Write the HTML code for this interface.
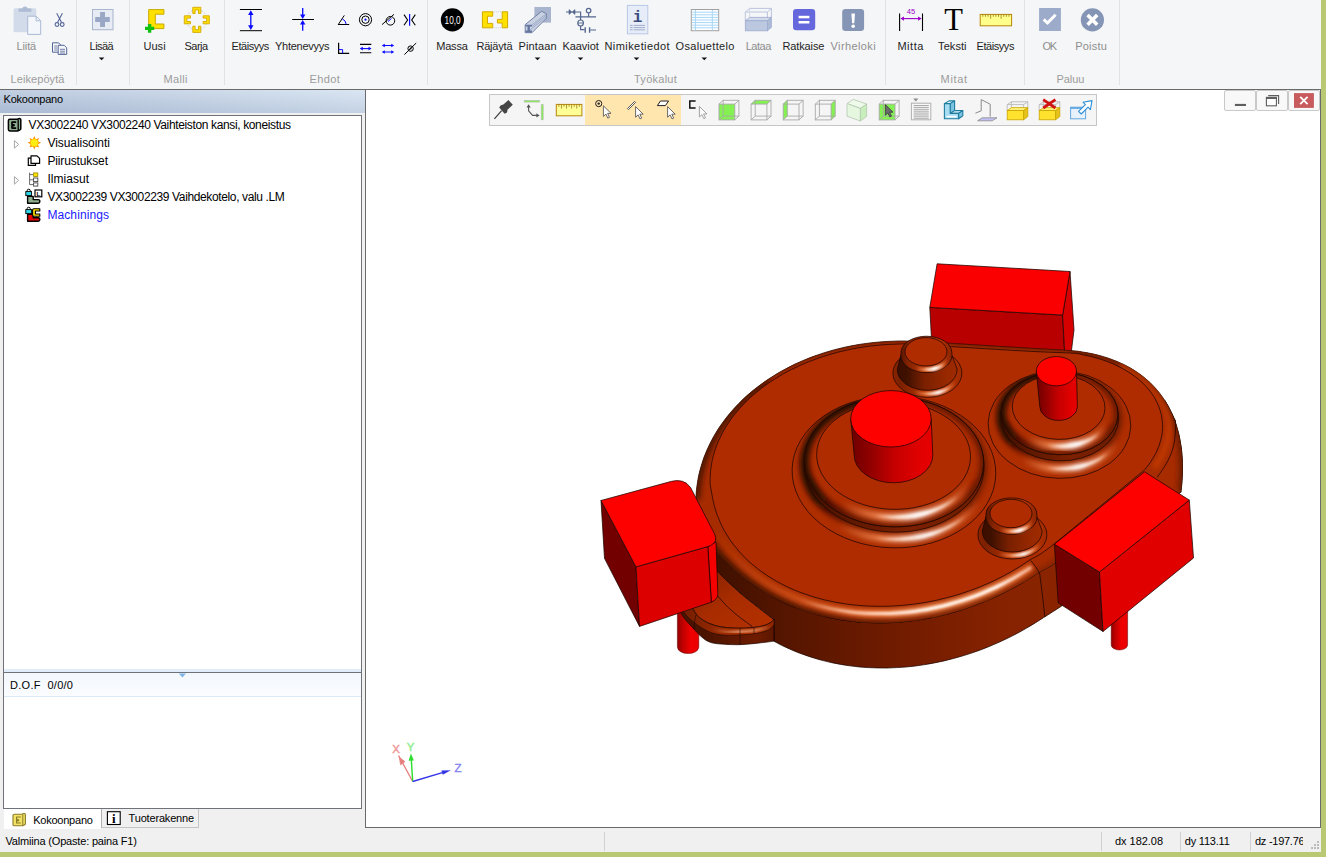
<!DOCTYPE html>
<html lang="fi"><head><meta charset="utf-8"><title>Kokoonpano</title>
<style>
html,body{margin:0;padding:0}
body{width:1326px;height:857px;overflow:hidden;background:#b9c973;position:relative;font-family:"Liberation Sans",sans-serif}
#app{position:absolute;left:0;top:0;width:1321px;height:852px;background:#f0f0f0;overflow:hidden}
#app>div,#app>svg{position:absolute}
.t{position:absolute;white-space:pre;z-index:5}
#ribbon{left:0;top:0;width:1321px;height:89px;background:#f5f6f7}
#ribbonline{left:0;top:89px;width:1321px;height:1px;background:#6a6a6a}
#seps{left:0;top:0}
.sep{position:absolute;top:0;width:1px;height:85px;background:#e1e2e4}
#panel{left:0;top:90px;width:365px;height:739px;background:#f0f0f0}
#panel>div{position:absolute}
#phead{left:0;top:0;width:365px;height:23px;background:linear-gradient(rgba(255,255,255,.12),rgba(40,70,120,.10)),linear-gradient(90deg,#b9c8de,#c4d2e5 45%,#d5e2f0)}
#tree{left:3px;top:25px;width:357px;height:556px;background:linear-gradient(#fff,#fff 553px,#e3edf9 553px);border:1px solid #6f7278}
#dof{left:3px;top:582px;width:357px;height:135px;background:linear-gradient(#f3f8fd,#fafcff 23px,#fff 24px);border:1px solid #6f7278}
#dofline{position:absolute;left:0;top:23px;width:357px;height:1px;background:#dbe9f9}
#tab1{left:4px;top:719px;width:97px;height:20px;background:#fff}
#tab2{left:101px;top:719px;width:96px;height:18px;background:#f0f0f0;border:1px solid #c4c4c4;border-top:none;border-left-color:#b0b0b0}
#view{left:365px;top:90px;width:954px;height:737px;background:#fff;border-left:1px solid #6a6a6a;border-bottom:1px solid #6a6a6a;border-right:1px solid #6a6a6a}
#ftb{left:489px;top:94px;width:606px;height:30px;background:#f5f5f5;border:1px solid #c6c6c6}
#ftbhl{position:absolute;left:95px;top:0;width:96px;height:30px;background:#ffe5ae}
#wbtns{left:1224px;top:90px;width:96px;height:21px}
.wb{position:absolute;top:0;width:30px;height:19px;background:#f8f8f8;border:1px solid #c9c9c9;border-radius:2px}
.wb:nth-child(1){left:0}.wb:nth-child(2){left:31.5px}.wb:nth-child(3){left:63.5px}
#status{left:0;top:829px;width:1321px;height:23px;background:#f0f0f0}
.ssep{position:absolute;top:3px;width:1px;height:19px;background:#d0d0d0}
#gfx{left:0;top:0;z-index:3}

</style></head>
<body>
<div id="app">
<div id="ribbon"></div>
<div id="ribbonline"></div>
<div id="seps"><div class="sep" style="left:76px"></div><div class="sep" style="left:129px"></div><div class="sep" style="left:224px"></div><div class="sep" style="left:427px"></div><div class="sep" style="left:885px"></div><div class="sep" style="left:1024px"></div><div class="sep" style="left:1119px"></div></div>
<div id="panel">
 <div id="phead"></div>
 <div id="tree"></div>
 <div id="dof"><div id="dofline"></div></div>
 <div id="tab1"></div><div id="tab2"></div>
</div>
<div id="view"></div>
<div id="ftb"><div id="ftbhl"></div></div>
<div id="wbtns"><div class="wb"></div><div class="wb"></div><div class="wb"></div></div>
<div id="status"><div class="ssep" style="left:604px"></div><div class="ssep" style="left:1101px"></div><div class="ssep" style="left:1180px"></div><div class="ssep" style="left:1250px"></div></div>
<svg id="gfx" width="1326" height="857" viewBox="0 0 1326 857">
<defs><filter id="b1" x="-20%" y="-20%" width="140%" height="140%"><feGaussianBlur stdDeviation="1"/></filter><filter id="b15" x="-20%" y="-20%" width="140%" height="140%"><feGaussianBlur stdDeviation="1.6"/></filter><filter id="b2" x="-20%" y="-20%" width="140%" height="140%"><feGaussianBlur stdDeviation="2.4"/></filter><filter id="b4" x="-20%" y="-20%" width="140%" height="140%"><feGaussianBlur stdDeviation="4"/></filter><linearGradient id="pinL" gradientUnits="userSpaceOnUse" x1="677.4" y1="0" x2="698.8" y2="0"><stop offset="0" stop-color="#960000"/><stop offset="0.3" stop-color="#c60000"/><stop offset="0.65" stop-color="#f00000"/><stop offset="1" stop-color="#e80000"/></linearGradient><linearGradient id="wallg" gradientUnits="userSpaceOnUse" x1="700" y1="0" x2="1066" y2="0"><stop offset="0" stop-color="#3a0f00"/><stop offset="0.22" stop-color="#541500"/><stop offset="0.55" stop-color="#721c00"/><stop offset="0.82" stop-color="#852200"/><stop offset="1" stop-color="#8b2400"/></linearGradient><linearGradient id="rimg" gradientUnits="userSpaceOnUse" x1="682" y1="0" x2="775" y2="0"><stop offset="0" stop-color="#4a1300"/><stop offset="0.25" stop-color="#4a1300"/><stop offset="0.55" stop-color="#5e1800"/><stop offset="0.8" stop-color="#6e1c00"/><stop offset="1" stop-color="#5a1600"/></linearGradient><linearGradient id="tabg" gradientUnits="userSpaceOnUse" x1="700" y1="580" x2="740" y2="640"><stop offset="0" stop-color="#8a2400"/><stop offset="0.45" stop-color="#a82c00"/><stop offset="1" stop-color="#b23000"/></linearGradient><linearGradient id="rimf" gradientUnits="userSpaceOnUse" x1="690" y1="0" x2="775" y2="0"><stop offset="0" stop-color="#7a2000"/><stop offset="0.4" stop-color="#9c2a00"/><stop offset="0.75" stop-color="#b03204"/><stop offset="1" stop-color="#8a2400"/></linearGradient><linearGradient id="rimhl" gradientUnits="userSpaceOnUse" x1="712" y1="0" x2="772" y2="0"><stop offset="0" stop-color="#ffb080" stop-opacity="0"/><stop offset="0.45" stop-color="#ffd0a8" stop-opacity="0.95"/><stop offset="0.75" stop-color="#ffc090" stop-opacity="0.8"/><stop offset="1" stop-color="#ffb080" stop-opacity="0"/></linearGradient><clipPath id="bandclip"><path d="M695.9,499.4 C696.0,498.0 696.1,493.7 696.4,490.8 C696.7,487.9 697.0,485.1 697.5,482.2 C697.9,479.4 698.5,476.5 699.1,473.7 C699.8,470.9 700.5,468.1 701.4,465.3 C702.2,462.5 703.1,459.7 704.1,457.0 C705.2,454.2 706.3,451.5 707.5,448.8 C708.7,446.1 710.0,443.4 711.4,440.8 C712.7,438.1 714.2,435.5 715.8,432.9 C717.3,430.3 719.0,427.8 720.7,425.3 C722.4,422.8 724.2,420.3 726.1,417.9 C728.0,415.4 730.0,413.0 732.1,410.7 C734.1,408.3 736.3,406.0 738.5,403.8 C740.7,401.5 743.0,399.3 745.3,397.1 C747.7,395.0 750.1,392.8 752.6,390.8 C755.1,388.7 757.7,386.7 760.4,384.8 C763.0,382.8 765.7,380.9 768.5,379.1 C771.3,377.2 774.1,375.5 777.0,373.7 C779.9,372.0 782.8,370.3 785.8,368.8 C788.8,367.2 791.9,365.6 795.0,364.1 C798.1,362.7 801.3,361.3 804.5,359.9 C807.7,358.6 811.0,357.3 814.3,356.1 C817.6,354.9 820.9,353.8 824.3,352.7 C827.6,351.7 831.1,350.7 834.5,349.7 C837.9,348.8 841.4,348.0 844.9,347.2 C848.4,346.4 852.0,345.7 855.5,345.1 C859.1,344.4 862.7,343.9 866.3,343.4 C869.9,342.9 873.5,342.5 877.1,342.2 C880.7,341.8 884.4,341.6 888.0,341.4 C891.7,341.2 895.3,341.1 899.0,341.0 C902.7,341.0 901.7,340.8 910.0,341.2 C918.2,341.5 933.5,342.3 948.5,343.2 C963.5,344.1 984.8,345.5 1000.0,346.4 C1015.2,347.3 1027.8,348.1 1040.0,348.8 C1052.2,349.5 1066.0,350.2 1073.0,350.8 C1080.1,351.3 1079.4,351.5 1082.5,352.0 C1085.6,352.4 1088.6,353.0 1091.6,353.6 C1094.6,354.3 1097.5,355.0 1100.3,355.7 C1103.2,356.5 1106.0,357.4 1108.7,358.3 C1111.4,359.2 1114.0,360.2 1116.6,361.3 C1119.2,362.3 1121.7,363.5 1124.2,364.7 C1126.6,365.9 1129.0,367.2 1131.3,368.5 C1133.6,369.9 1135.8,371.3 1137.9,372.8 C1140.1,374.3 1142.2,375.8 1144.2,377.5 C1146.2,379.1 1148.1,380.8 1150.0,382.5 C1151.8,384.3 1153.6,386.1 1155.3,388.0 C1157.0,389.9 1158.7,391.9 1160.2,393.9 C1161.8,396.0 1163.2,398.1 1164.6,400.2 C1166.0,402.4 1167.3,404.6 1168.6,406.9 C1169.8,409.2 1170.9,411.5 1172.0,413.9 C1173.1,416.3 1174.1,418.8 1175.0,421.3 C1175.9,423.8 1176.7,426.4 1177.4,429.1 C1178.2,431.7 1178.9,434.4 1179.4,437.1 C1180.0,439.9 1180.5,442.7 1180.9,445.6 C1181.3,448.4 1181.7,451.3 1181.9,454.3 C1182.2,457.3 1182.3,460.3 1182.4,463.3 C1182.5,466.4 1182.5,469.5 1182.4,472.7 C1182.3,475.8 1182.1,479.0 1181.9,482.3 C1181.6,485.5 1181.1,490.5 1180.9,492.2 L1066.0,555.0 C1064.0,556.5 1058.3,561.1 1053.8,564.0 C1049.3,566.9 1043.0,570.0 1039.0,572.4 C1035.0,574.8 1032.8,576.5 1029.7,578.4 C1026.5,580.4 1023.4,582.3 1020.2,584.1 C1017.0,585.9 1013.8,587.7 1010.5,589.4 C1007.3,591.1 1004.0,592.8 1000.7,594.3 C997.4,595.9 994.1,597.4 990.8,598.9 C987.4,600.4 984.1,601.8 980.7,603.1 C977.3,604.4 973.9,605.7 970.5,606.9 C967.1,608.1 963.7,609.2 960.2,610.3 C956.8,611.4 953.3,612.4 949.9,613.3 C946.4,614.3 943.0,615.1 939.5,615.9 C936.0,616.7 932.6,617.5 929.1,618.1 C925.6,618.8 922.1,619.4 918.6,619.9 C915.2,620.4 911.7,620.9 908.2,621.3 C904.7,621.7 901.3,622.0 897.8,622.2 C894.3,622.5 890.9,622.6 887.4,622.7 C884.0,622.8 880.5,622.9 877.1,622.8 C873.7,622.8 870.3,622.7 866.9,622.5 C863.5,622.4 860.1,622.1 856.7,621.8 C853.4,621.5 850.0,621.1 846.7,620.6 C843.4,620.2 840.0,619.7 836.8,619.1 C833.5,618.5 830.2,617.8 827.0,617.1 C823.8,616.3 820.6,615.5 817.4,614.7 C814.2,613.8 811.1,612.9 807.9,611.9 C804.8,610.9 801.7,609.8 798.7,608.7 C795.7,607.5 792.6,606.3 789.7,605.1 C786.7,603.8 783.8,602.5 780.9,601.1 C778.0,599.7 775.1,598.2 772.3,596.7 C769.5,595.2 766.7,593.6 764.0,591.9 C761.2,590.3 758.6,588.6 755.9,586.8 C753.3,585.0 750.7,583.2 748.2,581.3 C745.6,579.4 743.1,577.5 740.7,575.5 C738.3,573.5 735.9,571.4 733.5,569.3 C731.2,567.2 728.9,565.0 726.7,562.8 C724.5,560.6 722.3,558.3 720.2,556.0 C718.1,553.7 716.0,551.3 714.0,548.9 C712.0,546.4 709.2,542.7 708.2,541.4 L697.6,520 Z"/></clipPath><linearGradient id="fdk" gradientUnits="userSpaceOnUse" x1="716" y1="0" x2="1060" y2="0"><stop offset="0" stop-color="#4a1200" stop-opacity="1"/><stop offset="0.3" stop-color="#5a1600" stop-opacity="1"/><stop offset="0.6" stop-color="#7a2000" stop-opacity="0.95"/><stop offset="1" stop-color="#8a2600" stop-opacity="0.9"/></linearGradient><linearGradient id="fhl" gradientUnits="userSpaceOnUse" x1="716" y1="0" x2="1060" y2="0"><stop offset="0" stop-color="#e05818" stop-opacity="0"/><stop offset="0.1" stop-color="#d85416" stop-opacity="0.45"/><stop offset="0.3" stop-color="#f07030" stop-opacity="0.7"/><stop offset="0.45" stop-color="#ff8a4a" stop-opacity="0.95"/><stop offset="0.6" stop-color="#ffa870" stop-opacity="1"/><stop offset="0.8" stop-color="#ffa870" stop-opacity="1"/><stop offset="0.92" stop-color="#ff8040" stop-opacity="0.8"/><stop offset="1" stop-color="#ff8040" stop-opacity="0"/></linearGradient><linearGradient id="fhl2" gradientUnits="userSpaceOnUse" x1="800" y1="0" x2="1045" y2="0"><stop offset="0" stop-color="#fff" stop-opacity="0"/><stop offset="0.2" stop-color="#fff2e6" stop-opacity="0.6"/><stop offset="0.5" stop-color="#fff" stop-opacity="0.95"/><stop offset="0.8" stop-color="#fff" stop-opacity="0.95"/><stop offset="0.93" stop-color="#fff" stop-opacity="0.5"/><stop offset="1" stop-color="#fff" stop-opacity="0"/></linearGradient><clipPath id="topclip"><path d="M710.2,485.0 C710.2,483.8 710.1,480.1 710.1,477.6 C710.2,475.2 710.4,472.7 710.6,470.3 C710.9,467.8 711.3,465.3 711.7,462.9 C712.2,460.5 712.7,458.0 713.4,455.6 C714.0,453.2 714.8,450.7 715.6,448.3 C716.5,445.9 717.4,443.5 718.4,441.2 C719.5,438.8 720.6,436.4 721.8,434.1 C723.0,431.8 724.3,429.5 725.7,427.2 C727.1,424.9 728.6,422.6 730.1,420.4 C731.7,418.2 733.3,416.0 735.1,413.8 C736.8,411.6 738.6,409.5 740.5,407.4 C742.4,405.3 744.4,403.2 746.5,401.2 C748.5,399.2 750.7,397.2 752.9,395.3 C755.1,393.3 757.4,391.4 759.8,389.6 C762.1,387.7 764.6,385.9 767.1,384.1 C769.6,382.4 772.1,380.7 774.8,379.0 C777.4,377.3 780.1,375.7 782.8,374.1 C785.6,372.6 788.4,371.1 791.3,369.6 C794.1,368.2 797.1,366.8 800.0,365.4 C803.0,364.1 806.0,362.8 809.1,361.6 C812.2,360.4 815.3,359.2 818.5,358.1 C821.6,357.0 824.8,355.9 828.1,355.0 C831.3,354.0 834.6,353.1 837.9,352.2 C841.2,351.4 844.5,350.6 847.9,349.9 C851.2,349.1 854.6,348.5 858.0,347.9 C861.4,347.3 864.8,346.8 868.3,346.3 C871.7,345.9 875.2,345.5 878.6,345.2 C882.1,344.8 885.6,344.6 889.1,344.4 C892.6,344.2 896.0,344.1 899.5,344.0 C903.0,344.0 901.4,343.7 910.0,344.1 C918.6,344.5 936.2,345.7 951.2,346.6 C966.2,347.5 985.2,348.7 1000.0,349.6 C1014.8,350.5 1027.8,351.2 1040.0,351.8 C1052.2,352.4 1066.1,352.7 1073.1,353.2 C1080.1,353.7 1079.2,354.1 1082.1,354.6 C1085.1,355.2 1088.0,355.8 1090.9,356.5 C1093.8,357.2 1096.6,358.0 1099.4,358.8 C1102.1,359.7 1104.8,360.6 1107.5,361.6 C1110.1,362.6 1112.7,363.7 1115.2,364.8 C1117.7,366.0 1120.1,367.2 1122.4,368.5 C1124.7,369.7 1127.0,371.1 1129.2,372.5 C1131.3,373.9 1133.4,375.3 1135.4,376.8 C1137.4,378.3 1139.3,379.9 1141.0,381.5 C1142.8,383.1 1144.5,384.8 1146.1,386.5 C1147.7,388.2 1149.1,390.0 1150.5,391.8 C1151.9,393.6 1153.1,395.5 1154.3,397.4 C1155.4,399.2 1156.4,401.2 1157.3,403.1 C1158.2,405.0 1159.0,407.0 1159.7,409.0 C1160.4,411.0 1160.9,413.1 1161.4,415.1 C1161.8,417.1 1162.1,419.2 1162.3,421.3 C1162.5,423.4 1162.6,425.5 1162.5,427.5 C1162.5,429.6 1162.3,431.7 1162.0,433.8 C1161.7,435.9 1161.3,438.1 1160.7,440.1 C1160.2,442.2 1159.5,444.3 1158.8,446.4 C1158.0,448.5 1157.1,450.5 1156.1,452.6 C1155.1,454.6 1154.0,456.7 1152.7,458.7 C1151.5,460.7 1150.1,462.7 1148.7,464.6 C1147.2,466.6 1144.8,469.4 1144.0,470.4 L1054.4,543.8 L1054.4,543.8 C1052.2,545.4 1045.1,551.0 1041.0,553.7 C1036.9,556.4 1033.4,557.8 1030.0,559.8 C1026.6,561.9 1023.9,564.0 1020.8,566.0 C1017.7,567.9 1014.5,569.9 1011.3,571.7 C1008.0,573.6 1004.7,575.4 1001.3,577.1 C998.0,578.8 994.6,580.5 991.1,582.1 C987.6,583.7 984.1,585.2 980.6,586.6 C977.0,588.1 973.4,589.4 969.8,590.7 C966.2,592.0 962.5,593.2 958.8,594.4 C955.1,595.5 951.4,596.6 947.6,597.5 C943.9,598.5 940.1,599.4 936.3,600.3 C932.5,601.1 928.7,601.8 924.9,602.5 C921.1,603.1 917.3,603.7 913.4,604.2 C909.6,604.7 905.8,605.1 902.0,605.4 C898.1,605.7 894.3,606.0 890.5,606.1 C886.7,606.3 882.8,606.3 879.1,606.3 C875.3,606.3 871.5,606.2 867.7,606.0 C864.0,605.8 860.3,605.6 856.6,605.2 C852.9,604.9 849.2,604.4 845.5,603.9 C841.9,603.4 838.3,602.8 834.7,602.1 C831.2,601.4 827.7,600.6 824.2,599.8 C820.7,598.9 817.3,598.0 813.9,597.0 C810.5,596.0 807.2,594.9 804.0,593.7 C800.7,592.6 797.5,591.3 794.4,590.0 C791.2,588.7 788.2,587.3 785.2,585.8 C782.2,584.3 779.2,582.8 776.4,581.2 C773.5,579.6 770.7,577.9 768.0,576.1 C765.3,574.4 762.7,572.6 760.1,570.7 C757.6,568.8 755.2,566.8 752.8,564.8 C750.4,562.8 748.1,560.8 745.9,558.6 C743.8,556.5 741.7,554.3 739.7,552.1 C737.7,549.9 735.8,547.6 734.0,545.2 C732.1,542.9 730.4,540.5 728.8,538.0 C727.2,535.6 725.7,533.1 724.3,530.6 C722.9,528.1 721.6,525.5 720.5,522.9 C719.3,520.3 718.2,517.7 717.2,515.0 C716.2,512.3 715.4,509.6 714.6,506.9 C713.9,504.2 713.0,500.0 712.7,498.6 Z"/></clipPath><linearGradient id="sb1gr" gradientUnits="userSpaceOnUse" x1="892.9" y1="0" x2="961.9" y2="0"><stop offset="0" stop-color="#8a2400"/><stop offset="0.1" stop-color="#7a2000"/><stop offset="0.4" stop-color="#a82c00"/><stop offset="0.75" stop-color="#b83404"/><stop offset="1" stop-color="#a02a00"/></linearGradient><linearGradient id="sb1h1" gradientUnits="userSpaceOnUse" x1="913.6916919719495" y1="0" x2="955.1860180018589" y2="0"><stop offset="0" stop-color="#ff9a60" stop-opacity="0"/><stop offset="0.3" stop-color="#ff9a60" stop-opacity="0.8"/><stop offset="0.6" stop-color="#fff" stop-opacity="1"/><stop offset="0.85" stop-color="#ff9a60" stop-opacity="0.6"/><stop offset="1" stop-color="#ff9a60" stop-opacity="0"/></linearGradient><linearGradient id="sb1h1b" gradientUnits="userSpaceOnUse" x1="924.4935850835253" y1="0" x2="950.0688383542068" y2="0"><stop offset="0" stop-color="#fff0e4" stop-opacity="0"/><stop offset="0.3" stop-color="#fff0e4" stop-opacity="0.7200000000000001"/><stop offset="0.6" stop-color="#fff" stop-opacity="0.9"/><stop offset="0.85" stop-color="#fff0e4" stop-opacity="0.54"/><stop offset="1" stop-color="#fff0e4" stop-opacity="0"/></linearGradient><linearGradient id="sb1gw" gradientUnits="userSpaceOnUse" x1="897.3000000000001" y1="0" x2="957.1" y2="0"><stop offset="0" stop-color="#3a0e00"/><stop offset="0.15" stop-color="#3e1000"/><stop offset="0.45" stop-color="#7a2000"/><stop offset="0.8" stop-color="#962800"/><stop offset="1" stop-color="#a02a00"/></linearGradient><linearGradient id="sb1gf" gradientUnits="userSpaceOnUse" x1="900.8" y1="0" x2="952.0" y2="0"><stop offset="0" stop-color="#5a1600"/><stop offset="0.15" stop-color="#862400"/><stop offset="0.45" stop-color="#aa2e00"/><stop offset="0.75" stop-color="#b83404"/><stop offset="1" stop-color="#8a2400"/></linearGradient><linearGradient id="sb1h2" gradientUnits="userSpaceOnUse" x1="915.173334127648" y1="0" x2="947.5454222289724" y2="0"><stop offset="0" stop-color="#ff9a60" stop-opacity="0"/><stop offset="0.3" stop-color="#ff9a60" stop-opacity="0.8"/><stop offset="0.6" stop-color="#fff" stop-opacity="1"/><stop offset="0.85" stop-color="#ff9a60" stop-opacity="0.6"/><stop offset="1" stop-color="#ff9a60" stop-opacity="0"/></linearGradient><linearGradient id="sb1h2b" gradientUnits="userSpaceOnUse" x1="922.9452569344097" y1="0" x2="943.7061977434831" y2="0"><stop offset="0" stop-color="#fff4ea" stop-opacity="0"/><stop offset="0.3" stop-color="#fff4ea" stop-opacity="0.8"/><stop offset="0.6" stop-color="#fff" stop-opacity="1"/><stop offset="0.85" stop-color="#fff4ea" stop-opacity="0.6"/><stop offset="1" stop-color="#fff4ea" stop-opacity="0"/></linearGradient><clipPath id="rbcd"><path d="M988.1,424.6 A71.3,53.7 0 1 0 1130.8,424.6 A71.3,53.7 0 1 0 988.1,424.6Z"/></clipPath><clipPath id="rbcb"><path d="M1000.9,413.4 A58.4,41.3 0 1 0 1117.7,413.4 A58.4,41.3 0 1 0 1000.9,413.4Z"/></clipPath><linearGradient id="bs1" gradientUnits="userSpaceOnUse" x1="0" y1="459.92699999999996" x2="0" y2="441.15749999999997"><stop offset="0" stop-color="#2c0900" stop-opacity="0"/><stop offset="1" stop-color="#2c0900" stop-opacity="1"/></linearGradient><linearGradient id="rbh1" gradientUnits="userSpaceOnUse" x1="1022.4605658582678" y1="0" x2="1118.038888425762" y2="0"><stop offset="0" stop-color="#ff9e68" stop-opacity="0"/><stop offset="0.3" stop-color="#ff9e68" stop-opacity="0.8"/><stop offset="0.6" stop-color="#fff" stop-opacity="1"/><stop offset="0.85" stop-color="#ff9e68" stop-opacity="0.6"/><stop offset="1" stop-color="#ff9e68" stop-opacity="0"/></linearGradient><linearGradient id="rbh1b" gradientUnits="userSpaceOnUse" x1="1048.2899324453815" y1="0" x2="1108.9799803588392" y2="0"><stop offset="0" stop-color="#fff0e4" stop-opacity="0"/><stop offset="0.3" stop-color="#fff0e4" stop-opacity="0.8"/><stop offset="0.6" stop-color="#fff" stop-opacity="1"/><stop offset="0.85" stop-color="#fff0e4" stop-opacity="0.6"/><stop offset="1" stop-color="#fff0e4" stop-opacity="0"/></linearGradient><linearGradient id="rbgc" gradientUnits="userSpaceOnUse" x1="1000.5" y1="0" x2="1118.6" y2="0"><stop offset="0" stop-color="#3a0e00"/><stop offset="0.25" stop-color="#5e1800"/><stop offset="0.6" stop-color="#7c2000"/><stop offset="1" stop-color="#6a1c00"/></linearGradient><linearGradient id="bs2" gradientUnits="userSpaceOnUse" x1="0" y1="453.87300000000005" x2="0" y2="434.02500000000003"><stop offset="0" stop-color="#2c0900" stop-opacity="0"/><stop offset="1" stop-color="#2c0900" stop-opacity="1"/></linearGradient><linearGradient id="rbh2" gradientUnits="userSpaceOnUse" x1="1026.8037355781307" y1="0" x2="1106.7231236665596" y2="0"><stop offset="0" stop-color="#ff9e68" stop-opacity="0"/><stop offset="0.3" stop-color="#ff9e68" stop-opacity="0.8"/><stop offset="0.6" stop-color="#fff" stop-opacity="1"/><stop offset="0.85" stop-color="#ff9e68" stop-opacity="0.6"/><stop offset="1" stop-color="#ff9e68" stop-opacity="0"/></linearGradient><linearGradient id="rbh2b" gradientUnits="userSpaceOnUse" x1="1047.92517441564" y1="0" x2="1099.513957036828" y2="0"><stop offset="0" stop-color="#fff4ea" stop-opacity="0"/><stop offset="0.3" stop-color="#fff4ea" stop-opacity="0.8"/><stop offset="0.6" stop-color="#fff" stop-opacity="1"/><stop offset="0.85" stop-color="#fff4ea" stop-opacity="0.6"/><stop offset="1" stop-color="#fff4ea" stop-opacity="0"/></linearGradient><linearGradient id="rpg" gradientUnits="userSpaceOnUse" x1="1036.3" y1="0" x2="1076.5" y2="0"><stop offset="0" stop-color="#6e0000"/><stop offset="0.25" stop-color="#920000"/><stop offset="0.55" stop-color="#c60000"/><stop offset="0.85" stop-color="#e00000"/><stop offset="1" stop-color="#e60000"/></linearGradient><clipPath id="lbcd"><path d="M792.1,471.9 A101.8,75.9 0 1 0 995.8,471.9 A101.8,75.9 0 1 0 792.1,471.9Z"/></clipPath><clipPath id="lbcb"><path d="M804.0,461.9 A89.7,64.9 0 1 0 983.4,461.9 A89.7,64.9 0 1 0 804.0,461.9Z"/></clipPath><linearGradient id="bs3" gradientUnits="userSpaceOnUse" x1="0" y1="530.764" x2="0" y2="502.04"><stop offset="0" stop-color="#2c0900" stop-opacity="0"/><stop offset="1" stop-color="#2c0900" stop-opacity="1"/></linearGradient><linearGradient id="lbh1" gradientUnits="userSpaceOnUse" x1="839.2970243815639" y1="0" x2="980.3780871076714" y2="0"><stop offset="0" stop-color="#ff9e68" stop-opacity="0"/><stop offset="0.3" stop-color="#ff9e68" stop-opacity="0.8"/><stop offset="0.6" stop-color="#fff" stop-opacity="1"/><stop offset="0.85" stop-color="#ff9e68" stop-opacity="0.6"/><stop offset="1" stop-color="#ff9e68" stop-opacity="0"/></linearGradient><linearGradient id="lbh1b" gradientUnits="userSpaceOnUse" x1="877.4231851025673" y1="0" x2="967.0064318736399" y2="0"><stop offset="0" stop-color="#fff0e4" stop-opacity="0"/><stop offset="0.3" stop-color="#fff0e4" stop-opacity="0.8"/><stop offset="0.6" stop-color="#fff" stop-opacity="1"/><stop offset="0.85" stop-color="#fff0e4" stop-opacity="0.6"/><stop offset="1" stop-color="#fff0e4" stop-opacity="0"/></linearGradient><linearGradient id="lbgc" gradientUnits="userSpaceOnUse" x1="804" y1="0" x2="984" y2="0"><stop offset="0" stop-color="#3a0e00"/><stop offset="0.25" stop-color="#5e1800"/><stop offset="0.6" stop-color="#7c2000"/><stop offset="1" stop-color="#6a1c00"/></linearGradient><linearGradient id="bs4" gradientUnits="userSpaceOnUse" x1="0" y1="525.502" x2="0" y2="494.34999999999997"><stop offset="0" stop-color="#2c0900" stop-opacity="0"/><stop offset="1" stop-color="#2c0900" stop-opacity="1"/></linearGradient><linearGradient id="lbh2" gradientUnits="userSpaceOnUse" x1="842.4899917590096" y1="0" x2="970.0640149744912" y2="0"><stop offset="0" stop-color="#ff9e68" stop-opacity="0"/><stop offset="0.3" stop-color="#ff9e68" stop-opacity="0.8"/><stop offset="0.6" stop-color="#fff" stop-opacity="1"/><stop offset="0.85" stop-color="#ff9e68" stop-opacity="0.6"/><stop offset="1" stop-color="#ff9e68" stop-opacity="0"/></linearGradient><linearGradient id="lbh2b" gradientUnits="userSpaceOnUse" x1="876.2058020655065" y1="0" x2="958.5561391888558" y2="0"><stop offset="0" stop-color="#fff4ea" stop-opacity="0"/><stop offset="0.3" stop-color="#fff4ea" stop-opacity="0.8"/><stop offset="0.6" stop-color="#fff" stop-opacity="1"/><stop offset="0.85" stop-color="#fff4ea" stop-opacity="0.6"/><stop offset="1" stop-color="#fff4ea" stop-opacity="0"/></linearGradient><linearGradient id="lcg" gradientUnits="userSpaceOnUse" x1="850.7" y1="0" x2="931.2" y2="0"><stop offset="0" stop-color="#6e0000"/><stop offset="0.25" stop-color="#920000"/><stop offset="0.55" stop-color="#c60000"/><stop offset="0.85" stop-color="#e00000"/><stop offset="1" stop-color="#e60000"/></linearGradient><linearGradient id="sb2gr" gradientUnits="userSpaceOnUse" x1="977.9" y1="0" x2="1046.9" y2="0"><stop offset="0" stop-color="#8a2400"/><stop offset="0.1" stop-color="#7a2000"/><stop offset="0.4" stop-color="#a82c00"/><stop offset="0.75" stop-color="#b83404"/><stop offset="1" stop-color="#a02a00"/></linearGradient><linearGradient id="sb2h1" gradientUnits="userSpaceOnUse" x1="998.6916919719495" y1="0" x2="1040.1860180018589" y2="0"><stop offset="0" stop-color="#ff9a60" stop-opacity="0"/><stop offset="0.3" stop-color="#ff9a60" stop-opacity="0.8"/><stop offset="0.6" stop-color="#fff" stop-opacity="1"/><stop offset="0.85" stop-color="#ff9a60" stop-opacity="0.6"/><stop offset="1" stop-color="#ff9a60" stop-opacity="0"/></linearGradient><linearGradient id="sb2h1b" gradientUnits="userSpaceOnUse" x1="1009.4935850835253" y1="0" x2="1035.0688383542067" y2="0"><stop offset="0" stop-color="#fff0e4" stop-opacity="0"/><stop offset="0.3" stop-color="#fff0e4" stop-opacity="0.7200000000000001"/><stop offset="0.6" stop-color="#fff" stop-opacity="0.9"/><stop offset="0.85" stop-color="#fff0e4" stop-opacity="0.54"/><stop offset="1" stop-color="#fff0e4" stop-opacity="0"/></linearGradient><linearGradient id="sb2gw" gradientUnits="userSpaceOnUse" x1="982.3000000000001" y1="0" x2="1042.1000000000001" y2="0"><stop offset="0" stop-color="#3a0e00"/><stop offset="0.15" stop-color="#3e1000"/><stop offset="0.45" stop-color="#7a2000"/><stop offset="0.8" stop-color="#962800"/><stop offset="1" stop-color="#a02a00"/></linearGradient><linearGradient id="sb2gf" gradientUnits="userSpaceOnUse" x1="985.8" y1="0" x2="1037.0" y2="0"><stop offset="0" stop-color="#5a1600"/><stop offset="0.15" stop-color="#862400"/><stop offset="0.45" stop-color="#aa2e00"/><stop offset="0.75" stop-color="#b83404"/><stop offset="1" stop-color="#8a2400"/></linearGradient><linearGradient id="sb2h2" gradientUnits="userSpaceOnUse" x1="1000.173334127648" y1="0" x2="1032.5454222289725" y2="0"><stop offset="0" stop-color="#ff9a60" stop-opacity="0"/><stop offset="0.3" stop-color="#ff9a60" stop-opacity="0.8"/><stop offset="0.6" stop-color="#fff" stop-opacity="1"/><stop offset="0.85" stop-color="#ff9a60" stop-opacity="0.6"/><stop offset="1" stop-color="#ff9a60" stop-opacity="0"/></linearGradient><linearGradient id="sb2h2b" gradientUnits="userSpaceOnUse" x1="1007.9452569344097" y1="0" x2="1028.706197743483" y2="0"><stop offset="0" stop-color="#fff4ea" stop-opacity="0"/><stop offset="0.3" stop-color="#fff4ea" stop-opacity="0.8"/><stop offset="0.6" stop-color="#fff" stop-opacity="1"/><stop offset="0.85" stop-color="#fff4ea" stop-opacity="0.6"/><stop offset="1" stop-color="#fff4ea" stop-opacity="0"/></linearGradient><linearGradient id="pinR" gradientUnits="userSpaceOnUse" x1="1111.2" y1="0" x2="1127.6" y2="0"><stop offset="0" stop-color="#960000"/><stop offset="0.3" stop-color="#c60000"/><stop offset="0.65" stop-color="#f00000"/><stop offset="1" stop-color="#e80000"/></linearGradient></defs>
<g id="model">
<path d="M929.8,307.4 L1062.6,315.1 L1064.6,352.0 L931.8,345.0Z" fill="#b90000" stroke="#1c0600" stroke-width="0.75" stroke-linejoin="round"/>
<path d="M1070.0,271.5 L1074.0,329.8 L1071.3,352.0 L1064.6,352.0 L1062.6,315.1Z" fill="#d60000" stroke="#1c0600" stroke-width="0.75" stroke-linejoin="round"/>
<path d="M937.1,263.8 L1070.0,271.5 L1062.6,315.1 L929.8,307.4Z" fill="#fb0000" stroke="#1c0600" stroke-width="0.75" stroke-linejoin="round"/>
<path d="M677.4,600 V646.966 A10.699999999999989,6.633999999999993 0 0 0 698.8,646.966 V600Z" fill="url(#pinL)" stroke="#5a0000" stroke-width=".5"/>
<path d="M1066.0,555.0 C1064.0,556.5 1058.3,561.1 1053.8,564.0 C1049.3,566.9 1043.0,570.0 1039.0,572.4 C1035.0,574.8 1032.8,576.5 1029.7,578.4 C1026.5,580.4 1023.4,582.3 1020.2,584.1 C1017.0,585.9 1013.8,587.7 1010.5,589.4 C1007.3,591.1 1004.0,592.8 1000.7,594.3 C997.4,595.9 994.1,597.4 990.8,598.9 C987.4,600.4 984.1,601.8 980.7,603.1 C977.3,604.4 973.9,605.7 970.5,606.9 C967.1,608.1 963.7,609.2 960.2,610.3 C956.8,611.4 953.3,612.4 949.9,613.3 C946.4,614.3 943.0,615.1 939.5,615.9 C936.0,616.7 932.6,617.5 929.1,618.1 C925.6,618.8 922.1,619.4 918.6,619.9 C915.2,620.4 911.7,620.9 908.2,621.3 C904.7,621.7 901.3,622.0 897.8,622.2 C894.3,622.5 890.9,622.6 887.4,622.7 C884.0,622.8 880.5,622.9 877.1,622.8 C873.7,622.8 870.3,622.7 866.9,622.5 C863.5,622.4 860.1,622.1 856.7,621.8 C853.4,621.5 850.0,621.1 846.7,620.6 C843.4,620.2 840.0,619.7 836.8,619.1 C833.5,618.5 830.2,617.8 827.0,617.1 C823.8,616.3 820.6,615.5 817.4,614.7 C814.2,613.8 811.1,612.9 807.9,611.9 C804.8,610.9 801.7,609.8 798.7,608.7 C795.7,607.5 792.6,606.3 789.7,605.1 C786.7,603.8 783.8,602.5 780.9,601.1 C778.0,599.7 775.1,598.2 772.3,596.7 C769.5,595.2 766.7,593.6 764.0,591.9 C761.2,590.3 758.6,588.6 755.9,586.8 C753.3,585.0 750.7,583.2 748.2,581.3 C745.6,579.4 743.1,577.5 740.7,575.5 C738.3,573.5 735.9,571.4 733.5,569.3 C731.2,567.2 728.9,565.0 726.7,562.8 C724.5,560.6 722.3,558.3 720.2,556.0 C718.1,553.7 716.0,551.3 714.0,548.9 C712.0,546.4 709.2,542.7 708.2,541.4 L706.0,556.0 C708.0,558.7 712.4,565.8 718.1,572.0 C723.8,578.2 733.4,587.2 740.0,593.0 C746.6,598.8 752.0,602.6 757.5,607.0 C763.0,611.4 770.6,617.2 773.2,619.2 L774.1,641.1 L774.0,641.3 C775.3,641.9 779.1,644.0 781.7,645.3 C784.3,646.6 786.9,647.8 789.6,649.0 C792.3,650.2 795.0,651.3 797.7,652.4 C800.4,653.5 803.2,654.5 806.0,655.4 C808.8,656.4 811.6,657.3 814.5,658.2 C817.3,659.0 820.2,659.8 823.1,660.6 C826.0,661.3 828.9,662.0 831.9,662.7 C834.8,663.3 837.8,663.9 840.8,664.4 C843.8,664.9 846.8,665.4 849.8,665.8 C852.8,666.2 855.9,666.6 859.0,666.9 C862.0,667.1 865.1,667.4 868.2,667.6 C871.3,667.7 874.4,667.9 877.5,667.9 C880.6,668.0 883.8,668.0 886.9,668.0 C890.1,667.9 893.2,667.8 896.4,667.6 C899.5,667.5 902.7,667.2 905.9,667.0 C909.0,666.7 912.2,666.3 915.4,666.0 C918.6,665.6 921.7,665.1 924.9,664.6 C928.1,664.1 931.3,663.5 934.4,662.9 C937.6,662.3 940.8,661.6 944.0,660.9 C947.1,660.1 950.3,659.4 953.4,658.5 C956.6,657.7 959.7,656.8 962.9,655.8 C966.0,654.9 969.2,653.9 972.3,652.8 C975.4,651.7 978.5,650.6 981.6,649.5 C984.7,648.3 987.8,647.1 990.8,645.8 C993.9,644.5 996.9,643.2 1000.0,641.8 C1003.0,640.4 1006.0,639.0 1009.0,637.5 C1012.0,636.1 1014.9,634.5 1017.9,633.0 C1020.8,631.4 1023.7,629.8 1026.6,628.1 C1029.5,626.4 1032.4,624.7 1035.2,622.9 C1038.1,621.2 1039.5,620.2 1043.7,617.5 C1047.9,614.8 1056.2,609.6 1060.3,606.9 C1064.4,604.2 1066.7,602.0 1068.0,601.0 Z" fill="url(#wallg)" stroke="#1c0600" stroke-width="0.75" stroke-linejoin="round"/>
<path d="M1175.1,420.0 C1175.2,421.4 1175.9,424.0 1175.6,428.4 C1175.3,432.8 1174.9,440.6 1173.5,446.2 C1172.1,451.8 1169.9,456.8 1167.2,462.0 C1164.5,467.2 1159.0,474.7 1157.3,477.2 L1170,500 L1180.4,492.4 L1180.9,492.2 C1181.1,490.5 1181.6,485.5 1181.9,482.3 C1182.1,479.0 1182.3,475.8 1182.4,472.7 C1182.5,469.5 1182.5,466.4 1182.4,463.3 C1182.3,460.3 1182.2,457.3 1181.9,454.3 C1181.7,451.3 1181.3,448.4 1180.9,445.6 C1180.5,442.7 1180.0,439.9 1179.4,437.1 C1178.9,434.4 1178.2,431.7 1177.4,429.1 C1176.7,426.4 1175.9,423.8 1175.0,421.3 C1174.1,418.8 1173.1,416.3 1172.0,413.9 C1170.9,411.5 1169.8,409.2 1168.6,406.9 C1167.3,404.6 1165.3,401.3 1164.6,400.2 Z" fill="#8a2600" stroke="#1c0600" stroke-width="0.75"/>
<path d="M1030.8,560.5 Q1036.5,567 1039.7,573.6 L1042.3,594.1 L1044.9,617" fill="none" stroke="#1c0600" stroke-width="0.75"/>
<path d="M774.1,619.4 C773.4,620.0 771.6,622.0 770.0,623.0 C768.4,624.0 766.4,624.8 764.4,625.4 C762.5,626.1 760.3,626.5 758.3,626.8 C756.2,627.2 754.1,627.5 752.1,627.7 C750.0,627.9 748.0,628.0 746.0,628.1 C744.0,628.2 742.0,628.2 739.9,628.2 C737.9,628.2 735.8,628.1 733.7,628.1 C731.6,628.0 729.5,627.9 727.4,627.7 C725.3,627.5 723.2,627.2 721.1,626.9 C719.1,626.5 717.0,626.1 715.0,625.5 C713.0,624.9 711.0,624.2 709.0,623.4 C707.1,622.5 705.1,621.6 703.4,620.4 C701.6,619.3 699.8,618.0 698.3,616.5 C696.8,615.0 695.5,613.4 694.4,611.6 C693.4,609.8 692.6,607.7 691.8,605.8 C691.1,603.8 690.3,601.0 690.0,600.0 L679.0,609.0 C679.3,609.6 679.9,611.2 680.8,612.7 C681.7,614.3 683.0,616.5 684.3,618.2 C685.5,620.0 687.0,621.7 688.5,623.3 C689.9,624.9 691.4,626.4 692.8,627.9 C694.2,629.4 695.5,630.9 696.9,632.3 C698.3,633.8 699.7,635.3 701.2,636.6 C702.7,637.9 704.4,639.3 706.2,640.4 C708.0,641.4 709.9,642.2 711.9,642.8 C713.9,643.3 716.0,643.5 718.1,643.8 C720.1,644.0 722.3,644.1 724.4,644.2 C726.5,644.4 728.5,644.5 730.6,644.6 C732.7,644.7 734.7,644.7 736.8,644.7 C738.8,644.7 740.9,644.6 743.0,644.5 C745.0,644.4 747.1,644.2 749.2,644.0 C751.3,643.8 753.4,643.6 755.5,643.4 C757.7,643.2 760.0,642.9 762.2,642.6 C764.4,642.4 766.7,642.1 768.7,641.8 C770.7,641.6 773.2,641.2 774.1,641.1 Z" fill="url(#rimg)" stroke="#1c0600" stroke-width="0.75" stroke-linejoin="round"/>
<path d="M706.0,556.0 C708.0,558.7 712.4,565.8 718.1,572.0 C723.8,578.2 733.4,587.2 740.0,593.0 C746.6,598.8 752.0,602.6 757.5,607.0 C763.0,611.4 770.6,617.2 773.2,619.2 L774.1,619.4 L774.1,619.4 C773.4,620.0 771.6,622.0 770.0,623.0 C768.4,624.0 766.4,624.8 764.4,625.4 C762.5,626.1 760.3,626.5 758.3,626.8 C756.2,627.2 754.1,627.5 752.1,627.7 C750.0,627.9 748.0,628.0 746.0,628.1 C744.0,628.2 742.0,628.2 739.9,628.2 C737.9,628.2 735.8,628.1 733.7,628.1 C731.6,628.0 729.5,627.9 727.4,627.7 C725.3,627.5 723.2,627.2 721.1,626.9 C719.1,626.5 717.0,626.1 715.0,625.5 C713.0,624.9 711.0,624.2 709.0,623.4 C707.1,622.5 705.1,621.6 703.4,620.4 C701.6,619.3 699.8,618.0 698.3,616.5 C696.8,615.0 695.5,613.4 694.4,611.6 C693.4,609.8 692.6,607.7 691.8,605.8 C691.1,603.8 690.3,601.0 690.0,600.0 L700,585 Z" fill="url(#tabg)" stroke="#1c0600" stroke-width="0.75" stroke-linejoin="round"/>
<path d="M716.0,594.0 C718.0,596.2 723.7,603.1 727.7,607.0 C731.7,610.9 736.0,614.3 740.0,617.5 C744.0,620.7 749.6,624.3 752.0,626.4 C754.4,628.5 754.2,629.4 754.6,630.0 " fill="none" stroke="#1c0600" stroke-width="0.75"/>
<path d="M774.1,619.4 C773.4,620.0 771.6,622.0 770.0,623.0 C768.4,624.0 766.4,624.8 764.4,625.4 C762.5,626.1 760.3,626.5 758.3,626.8 C756.2,627.2 754.1,627.5 752.1,627.7 C750.0,627.9 748.0,628.0 746.0,628.1 C744.0,628.2 742.0,628.2 739.9,628.2 C737.9,628.2 735.8,628.1 733.7,628.1 C731.6,628.0 729.5,627.9 727.4,627.7 C725.3,627.5 723.2,627.2 721.1,626.9 C719.1,626.5 717.0,626.1 715.0,625.5 C713.0,624.9 711.0,624.2 709.0,623.4 C707.1,622.5 705.1,621.6 703.4,620.4 C701.6,619.3 699.8,618.0 698.3,616.5 C696.8,615.0 695.5,613.4 694.4,611.6 C693.4,609.8 692.6,607.7 691.8,605.8 C691.1,603.8 690.3,601.0 690.0,600.0 L683.0,611.0 C683.8,612.0 685.9,615.0 687.8,617.0 C689.7,619.0 691.8,620.8 694.3,622.7 C696.8,624.6 699.4,626.6 702.5,628.4 C705.6,630.2 709.3,632.1 713.1,633.3 C716.9,634.4 720.9,635.0 725.4,635.3 C729.9,635.6 735.2,635.1 740.0,634.9 C744.8,634.6 749.2,634.6 754.0,633.8 C758.8,633.0 765.3,631.5 768.6,630.0 C771.9,628.5 773.1,625.5 774.0,624.6 Z" fill="url(#rimf)" stroke="none"/>
<path d="M774.0,624.6 C773.1,625.5 771.9,628.5 768.6,630.0 C765.3,631.5 758.8,633.0 754.0,633.8 C749.2,634.6 744.8,634.6 740.0,634.9 C735.2,635.1 729.9,635.6 725.4,635.3 C720.9,635.0 716.9,634.4 713.1,633.3 C709.3,632.1 705.6,630.2 702.5,628.4 C699.4,626.6 696.8,624.6 694.3,622.7 C691.8,620.8 689.7,619.0 687.8,617.0 C685.9,615.0 683.8,612.0 683.0,611.0 " fill="none" stroke="#1c0600" stroke-width=".6"/>
<path d="M774.1,619.4 C773.4,620.0 771.6,622.0 770.0,623.0 C768.4,624.0 766.4,624.8 764.4,625.4 C762.5,626.1 760.3,626.5 758.3,626.8 C756.2,627.2 754.1,627.5 752.1,627.7 C750.0,627.9 748.0,628.0 746.0,628.1 C744.0,628.2 742.0,628.2 739.9,628.2 C737.9,628.2 735.8,628.1 733.7,628.1 C731.6,628.0 729.5,627.9 727.4,627.7 C725.3,627.5 723.2,627.2 721.1,626.9 C719.1,626.5 717.0,626.1 715.0,625.5 C713.0,624.9 711.0,624.2 709.0,623.4 C707.1,622.5 705.1,621.6 703.4,620.4 C701.6,619.3 699.8,618.0 698.3,616.5 C696.8,615.0 695.5,613.4 694.4,611.6 C693.4,609.8 692.6,607.7 691.8,605.8 C691.1,603.8 690.3,601.0 690.0,600.0 " fill="none" stroke="#1c0600" stroke-width=".6"/>
<path d="M713.0,629.4 C715.1,629.8 720.9,631.2 725.4,631.6 C729.9,632.0 735.2,631.8 740.0,631.6 C744.8,631.4 749.3,631.3 754.0,630.6 C758.7,629.9 766.0,627.8 768.4,627.2 " fill="none" stroke="url(#rimhl)" stroke-width="1.8" filter="url(#b1)"/>
<path d="M740,628.2 V644.7 M754,627.6 V633.8 M774.1,619.4 V641.1 M694.3,622.7 V629.2 M696,614.5 L694.3,622.7" fill="none" stroke="#1c0600" stroke-width=".6"/>
<path d="M695.9,499.4 C696.0,498.0 696.1,493.7 696.4,490.8 C696.7,487.9 697.0,485.1 697.5,482.2 C697.9,479.4 698.5,476.5 699.1,473.7 C699.8,470.9 700.5,468.1 701.4,465.3 C702.2,462.5 703.1,459.7 704.1,457.0 C705.2,454.2 706.3,451.5 707.5,448.8 C708.7,446.1 710.0,443.4 711.4,440.8 C712.7,438.1 714.2,435.5 715.8,432.9 C717.3,430.3 719.0,427.8 720.7,425.3 C722.4,422.8 724.2,420.3 726.1,417.9 C728.0,415.4 730.0,413.0 732.1,410.7 C734.1,408.3 736.3,406.0 738.5,403.8 C740.7,401.5 743.0,399.3 745.3,397.1 C747.7,395.0 750.1,392.8 752.6,390.8 C755.1,388.7 757.7,386.7 760.4,384.8 C763.0,382.8 765.7,380.9 768.5,379.1 C771.3,377.2 774.1,375.5 777.0,373.7 C779.9,372.0 782.8,370.3 785.8,368.8 C788.8,367.2 791.9,365.6 795.0,364.1 C798.1,362.7 801.3,361.3 804.5,359.9 C807.7,358.6 811.0,357.3 814.3,356.1 C817.6,354.9 820.9,353.8 824.3,352.7 C827.6,351.7 831.1,350.7 834.5,349.7 C837.9,348.8 841.4,348.0 844.9,347.2 C848.4,346.4 852.0,345.7 855.5,345.1 C859.1,344.4 862.7,343.9 866.3,343.4 C869.9,342.9 873.5,342.5 877.1,342.2 C880.7,341.8 884.4,341.6 888.0,341.4 C891.7,341.2 895.3,341.1 899.0,341.0 C902.7,341.0 901.7,340.8 910.0,341.2 C918.2,341.5 933.5,342.3 948.5,343.2 C963.5,344.1 984.8,345.5 1000.0,346.4 C1015.2,347.3 1027.8,348.1 1040.0,348.8 C1052.2,349.5 1066.0,350.2 1073.0,350.8 C1080.1,351.3 1079.4,351.5 1082.5,352.0 C1085.6,352.4 1088.6,353.0 1091.6,353.6 C1094.6,354.3 1097.5,355.0 1100.3,355.7 C1103.2,356.5 1106.0,357.4 1108.7,358.3 C1111.4,359.2 1114.0,360.2 1116.6,361.3 C1119.2,362.3 1121.7,363.5 1124.2,364.7 C1126.6,365.9 1129.0,367.2 1131.3,368.5 C1133.6,369.9 1135.8,371.3 1137.9,372.8 C1140.1,374.3 1142.2,375.8 1144.2,377.5 C1146.2,379.1 1148.1,380.8 1150.0,382.5 C1151.8,384.3 1153.6,386.1 1155.3,388.0 C1157.0,389.9 1158.7,391.9 1160.2,393.9 C1161.8,396.0 1163.2,398.1 1164.6,400.2 C1166.0,402.4 1167.3,404.6 1168.6,406.9 C1169.8,409.2 1170.9,411.5 1172.0,413.9 C1173.1,416.3 1174.1,418.8 1175.0,421.3 C1175.9,423.8 1176.7,426.4 1177.4,429.1 C1178.2,431.7 1178.9,434.4 1179.4,437.1 C1180.0,439.9 1180.5,442.7 1180.9,445.6 C1181.3,448.4 1181.7,451.3 1181.9,454.3 C1182.2,457.3 1182.3,460.3 1182.4,463.3 C1182.5,466.4 1182.5,469.5 1182.4,472.7 C1182.3,475.8 1182.1,479.0 1181.9,482.3 C1181.6,485.5 1181.1,490.5 1180.9,492.2 L1066.0,555.0 C1064.0,556.5 1058.3,561.1 1053.8,564.0 C1049.3,566.9 1043.0,570.0 1039.0,572.4 C1035.0,574.8 1032.8,576.5 1029.7,578.4 C1026.5,580.4 1023.4,582.3 1020.2,584.1 C1017.0,585.9 1013.8,587.7 1010.5,589.4 C1007.3,591.1 1004.0,592.8 1000.7,594.3 C997.4,595.9 994.1,597.4 990.8,598.9 C987.4,600.4 984.1,601.8 980.7,603.1 C977.3,604.4 973.9,605.7 970.5,606.9 C967.1,608.1 963.7,609.2 960.2,610.3 C956.8,611.4 953.3,612.4 949.9,613.3 C946.4,614.3 943.0,615.1 939.5,615.9 C936.0,616.7 932.6,617.5 929.1,618.1 C925.6,618.8 922.1,619.4 918.6,619.9 C915.2,620.4 911.7,620.9 908.2,621.3 C904.7,621.7 901.3,622.0 897.8,622.2 C894.3,622.5 890.9,622.6 887.4,622.7 C884.0,622.8 880.5,622.9 877.1,622.8 C873.7,622.8 870.3,622.7 866.9,622.5 C863.5,622.4 860.1,622.1 856.7,621.8 C853.4,621.5 850.0,621.1 846.7,620.6 C843.4,620.2 840.0,619.7 836.8,619.1 C833.5,618.5 830.2,617.8 827.0,617.1 C823.8,616.3 820.6,615.5 817.4,614.7 C814.2,613.8 811.1,612.9 807.9,611.9 C804.8,610.9 801.7,609.8 798.7,608.7 C795.7,607.5 792.6,606.3 789.7,605.1 C786.7,603.8 783.8,602.5 780.9,601.1 C778.0,599.7 775.1,598.2 772.3,596.7 C769.5,595.2 766.7,593.6 764.0,591.9 C761.2,590.3 758.6,588.6 755.9,586.8 C753.3,585.0 750.7,583.2 748.2,581.3 C745.6,579.4 743.1,577.5 740.7,575.5 C738.3,573.5 735.9,571.4 733.5,569.3 C731.2,567.2 728.9,565.0 726.7,562.8 C724.5,560.6 722.3,558.3 720.2,556.0 C718.1,553.7 716.0,551.3 714.0,548.9 C712.0,546.4 709.2,542.7 708.2,541.4 L697.6,520 Z" fill="#a62c00" stroke="#1c0600" stroke-width="0.75" stroke-linejoin="round"/>
<g clip-path="url(#bandclip)">
<path d="M695.9,499.4 C696.0,498.0 696.1,493.7 696.4,490.8 C696.7,487.9 697.0,485.1 697.5,482.2 C697.9,479.4 698.5,476.5 699.1,473.7 C699.8,470.9 700.5,468.1 701.4,465.3 C702.2,462.5 703.1,459.7 704.1,457.0 C705.2,454.2 706.3,451.5 707.5,448.8 C708.7,446.1 710.0,443.4 711.4,440.8 C712.7,438.1 714.2,435.5 715.8,432.9 C717.3,430.3 719.0,427.8 720.7,425.3 C722.4,422.8 724.2,420.3 726.1,417.9 C728.0,415.4 730.0,413.0 732.1,410.7 C734.1,408.3 736.3,406.0 738.5,403.8 C740.7,401.5 743.0,399.3 745.3,397.1 C747.7,395.0 750.1,392.8 752.6,390.8 C755.1,388.7 757.7,386.7 760.4,384.8 C763.0,382.8 767.1,380.0 768.5,379.1 " fill="none" stroke="#4a1200" stroke-width="9" filter="url(#b2)" opacity=".9"/>
<path d="M760.4,384.8 C761.7,383.8 765.7,380.9 768.5,379.1 C771.3,377.2 774.1,375.5 777.0,373.7 C779.9,372.0 782.8,370.3 785.8,368.8 C788.8,367.2 791.9,365.6 795.0,364.1 C798.1,362.7 801.3,361.3 804.5,359.9 C807.7,358.6 811.0,357.3 814.3,356.1 C817.6,354.9 820.9,353.8 824.3,352.7 C827.6,351.7 831.1,350.7 834.5,349.7 C837.9,348.8 841.4,348.0 844.9,347.2 C848.4,346.4 852.0,345.7 855.5,345.1 C859.1,344.4 862.7,343.9 866.3,343.4 C869.9,342.9 873.5,342.5 877.1,342.2 C880.7,341.8 884.4,341.6 888.0,341.4 C891.7,341.2 895.3,341.1 899.0,341.0 C902.7,341.0 901.7,340.8 910.0,341.2 C918.2,341.5 933.5,342.3 948.5,343.2 C963.5,344.1 984.8,345.5 1000.0,346.4 C1015.2,347.3 1027.8,348.1 1040.0,348.8 C1052.2,349.5 1066.0,350.2 1073.0,350.8 C1080.1,351.3 1079.4,351.5 1082.5,352.0 C1085.6,352.4 1090.1,353.4 1091.6,353.6 " fill="none" stroke="#6a1a00" stroke-width="3" filter="url(#b1)" opacity=".8"/>
<path d="M1073.0,350.8 C1074.6,351.0 1079.4,351.5 1082.5,352.0 C1085.6,352.4 1088.6,353.0 1091.6,353.6 C1094.6,354.3 1097.5,355.0 1100.3,355.7 C1103.2,356.5 1106.0,357.4 1108.7,358.3 C1111.4,359.2 1114.0,360.2 1116.6,361.3 C1119.2,362.3 1121.7,363.5 1124.2,364.7 C1126.6,365.9 1129.0,367.2 1131.3,368.5 C1133.6,369.9 1135.8,371.3 1137.9,372.8 C1140.1,374.3 1142.2,375.8 1144.2,377.5 C1146.2,379.1 1148.1,380.8 1150.0,382.5 C1151.8,384.3 1153.6,386.1 1155.3,388.0 C1157.0,389.9 1158.7,391.9 1160.2,393.9 C1161.8,396.0 1163.2,398.1 1164.6,400.2 C1166.0,402.4 1167.3,404.6 1168.6,406.9 C1169.8,409.2 1170.9,411.5 1172.0,413.9 C1173.1,416.3 1174.1,418.8 1175.0,421.3 C1175.9,423.8 1176.7,426.4 1177.4,429.1 C1178.2,431.7 1178.9,434.4 1179.4,437.1 C1180.0,439.9 1180.5,442.7 1180.9,445.6 C1181.3,448.4 1181.7,451.3 1181.9,454.3 C1182.2,457.3 1182.3,460.3 1182.4,463.3 C1182.5,466.4 1182.5,469.5 1182.4,472.7 C1182.3,475.8 1182.1,479.0 1181.9,482.3 C1181.6,485.5 1181.1,490.5 1180.9,492.2 " fill="none" stroke="#6a1c00" stroke-width="8" filter="url(#b2)" opacity=".9"/>
<path d="M1120.0,365.0 C1124.0,367.7 1137.3,375.2 1144.0,381.0 C1150.7,386.8 1155.9,393.5 1160.0,400.0 C1164.1,406.5 1167.3,413.7 1168.6,420.0 C1169.9,426.3 1169.0,432.3 1168.0,438.0 C1167.0,443.7 1164.9,449.0 1162.6,454.0 C1160.3,459.0 1155.4,465.7 1154.0,468.0 " fill="none" stroke="#c83c06" stroke-width="5" filter="url(#b2)" opacity=".9"/>
<path d="M1066.0,555.0 C1064.0,556.5 1058.3,561.1 1053.8,564.0 C1049.3,566.9 1043.0,570.0 1039.0,572.4 C1035.0,574.8 1032.8,576.5 1029.7,578.4 C1026.5,580.4 1023.4,582.3 1020.2,584.1 C1017.0,585.9 1013.8,587.7 1010.5,589.4 C1007.3,591.1 1004.0,592.8 1000.7,594.3 C997.4,595.9 994.1,597.4 990.8,598.9 C987.4,600.4 984.1,601.8 980.7,603.1 C977.3,604.4 973.9,605.7 970.5,606.9 C967.1,608.1 963.7,609.2 960.2,610.3 C956.8,611.4 953.3,612.4 949.9,613.3 C946.4,614.3 943.0,615.1 939.5,615.9 C936.0,616.7 932.6,617.5 929.1,618.1 C925.6,618.8 922.1,619.4 918.6,619.9 C915.2,620.4 911.7,620.9 908.2,621.3 C904.7,621.7 901.3,622.0 897.8,622.2 C894.3,622.5 890.9,622.6 887.4,622.7 C884.0,622.8 880.5,622.9 877.1,622.8 C873.7,622.8 870.3,622.7 866.9,622.5 C863.5,622.4 860.1,622.1 856.7,621.8 C853.4,621.5 850.0,621.1 846.7,620.6 C843.4,620.2 840.0,619.7 836.8,619.1 C833.5,618.5 830.2,617.8 827.0,617.1 C823.8,616.3 820.6,615.5 817.4,614.7 C814.2,613.8 811.1,612.9 807.9,611.9 C804.8,610.9 801.7,609.8 798.7,608.7 C795.7,607.5 792.6,606.3 789.7,605.1 C786.7,603.8 783.8,602.5 780.9,601.1 C778.0,599.7 775.1,598.2 772.3,596.7 C769.5,595.2 766.7,593.6 764.0,591.9 C761.2,590.3 758.6,588.6 755.9,586.8 C753.3,585.0 750.7,583.2 748.2,581.3 C745.6,579.4 743.1,577.5 740.7,575.5 C738.3,573.5 735.9,571.4 733.5,569.3 C731.2,567.2 728.9,565.0 726.7,562.8 C724.5,560.6 722.3,558.3 720.2,556.0 C718.1,553.7 716.0,551.3 714.0,548.9 C712.0,546.4 709.2,542.7 708.2,541.4 " fill="none" stroke="url(#fdk)" stroke-width="9" filter="url(#b2)"/>
<path d="M1031.6,566.9 C1030.1,567.9 1025.6,570.9 1022.4,572.8 C1019.3,574.8 1016.2,576.6 1012.9,578.5 C1009.6,580.3 1006.2,582.1 1002.8,583.8 C999.4,585.5 996.2,587.1 992.7,588.7 C989.2,590.3 985.5,591.9 982.0,593.3 C978.4,594.8 975.1,596.1 971.5,597.4 C967.8,598.7 964.0,600.0 960.3,601.1 C956.7,602.2 953.2,603.2 949.5,604.2 C945.8,605.2 942.0,606.2 938.2,607.0 C934.4,607.9 930.6,608.7 926.7,609.4 C922.9,610.0 919.1,610.6 915.3,611.2 C911.4,611.7 908.1,612.1 903.8,612.5 C899.4,612.9 893.5,613.2 889.1,613.4 C884.8,613.6 881.5,613.6 877.8,613.6 C874.0,613.6 870.2,613.4 866.5,613.2 C862.7,613.0 859.0,612.7 855.3,612.4 C851.6,612.0 848.0,611.6 844.3,611.0 C840.6,610.5 836.8,609.8 833.2,609.1 C829.7,608.4 826.5,607.7 823.1,606.8 C819.6,606.0 816.1,605.0 812.7,604.0 C809.2,602.9 805.8,601.8 802.5,600.6 C799.3,599.5 796.3,598.3 793.2,597.0 C790.0,595.7 786.7,594.2 783.7,592.7 C780.7,591.3 777.8,589.8 775.0,588.2 C772.1,586.7 769.4,585.0 766.6,583.3 C763.9,581.6 761.3,579.9 758.7,578.0 C756.1,576.2 753.6,574.3 751.1,572.4 C748.7,570.4 746.3,568.4 744.0,566.3 C741.7,564.3 739.4,562.1 737.3,560.0 C735.2,557.9 733.4,555.8 731.4,553.6 C729.5,551.4 727.4,548.9 725.7,546.6 C723.9,544.3 722.3,542.1 720.7,539.7 C719.1,537.3 716.8,533.5 716.0,532.3 " fill="none" stroke="url(#fhl)" stroke-width="7" filter="url(#b2)"/>
<path d="M1031.6,566.9 C1030.1,567.9 1025.6,570.9 1022.4,572.8 C1019.3,574.8 1016.2,576.6 1012.9,578.5 C1009.6,580.3 1006.2,582.1 1002.8,583.8 C999.4,585.5 996.2,587.1 992.7,588.7 C989.2,590.3 985.5,591.9 982.0,593.3 C978.4,594.8 975.1,596.1 971.5,597.4 C967.8,598.7 964.0,600.0 960.3,601.1 C956.7,602.2 953.2,603.2 949.5,604.2 C945.8,605.2 942.0,606.2 938.2,607.0 C934.4,607.9 930.6,608.7 926.7,609.4 C922.9,610.0 919.1,610.6 915.3,611.2 C911.4,611.7 908.1,612.1 903.8,612.5 C899.4,612.9 893.5,613.2 889.1,613.4 C884.8,613.6 881.5,613.6 877.8,613.6 C874.0,613.6 870.2,613.4 866.5,613.2 C862.7,613.0 859.0,612.7 855.3,612.4 C851.6,612.0 848.0,611.6 844.3,611.0 C840.6,610.5 836.8,609.8 833.2,609.1 C829.7,608.4 826.5,607.7 823.1,606.8 C819.6,606.0 816.1,605.0 812.7,604.0 C809.2,602.9 805.8,601.8 802.5,600.6 C799.3,599.5 796.3,598.3 793.2,597.0 C790.0,595.7 786.7,594.2 783.7,592.7 C780.7,591.3 777.8,589.8 775.0,588.2 C772.1,586.7 769.4,585.0 766.6,583.3 C763.9,581.6 761.3,579.9 758.7,578.0 C756.1,576.2 753.6,574.3 751.1,572.4 C748.7,570.4 746.3,568.4 744.0,566.3 C741.7,564.3 739.4,562.1 737.3,560.0 C735.2,557.9 733.4,555.8 731.4,553.6 C729.5,551.4 727.4,548.9 725.7,546.6 C723.9,544.3 722.3,542.1 720.7,539.7 C719.1,537.3 716.8,533.5 716.0,532.3 " fill="none" stroke="url(#fhl2)" stroke-width="3" filter="url(#b1)"/>
</g>
<path d="M1175.1,420.0 C1175.2,421.4 1175.9,424.0 1175.6,428.4 C1175.3,432.8 1174.9,440.6 1173.5,446.2 C1172.1,451.8 1169.9,456.8 1167.2,462.0 C1164.5,467.2 1159.0,474.7 1157.3,477.2 " fill="none" stroke="#1c0600" stroke-width="0.75"/>
<path d="M1030.8,560.5 Q1036.5,567 1039.7,573.6" fill="none" stroke="#1c0600" stroke-width="0.75"/>
<path d="M710.2,485.0 C710.2,483.8 710.1,480.1 710.1,477.6 C710.2,475.2 710.4,472.7 710.6,470.3 C710.9,467.8 711.3,465.3 711.7,462.9 C712.2,460.5 712.7,458.0 713.4,455.6 C714.0,453.2 714.8,450.7 715.6,448.3 C716.5,445.9 717.4,443.5 718.4,441.2 C719.5,438.8 720.6,436.4 721.8,434.1 C723.0,431.8 724.3,429.5 725.7,427.2 C727.1,424.9 728.6,422.6 730.1,420.4 C731.7,418.2 733.3,416.0 735.1,413.8 C736.8,411.6 738.6,409.5 740.5,407.4 C742.4,405.3 744.4,403.2 746.5,401.2 C748.5,399.2 750.7,397.2 752.9,395.3 C755.1,393.3 757.4,391.4 759.8,389.6 C762.1,387.7 764.6,385.9 767.1,384.1 C769.6,382.4 772.1,380.7 774.8,379.0 C777.4,377.3 780.1,375.7 782.8,374.1 C785.6,372.6 788.4,371.1 791.3,369.6 C794.1,368.2 797.1,366.8 800.0,365.4 C803.0,364.1 806.0,362.8 809.1,361.6 C812.2,360.4 815.3,359.2 818.5,358.1 C821.6,357.0 824.8,355.9 828.1,355.0 C831.3,354.0 834.6,353.1 837.9,352.2 C841.2,351.4 844.5,350.6 847.9,349.9 C851.2,349.1 854.6,348.5 858.0,347.9 C861.4,347.3 864.8,346.8 868.3,346.3 C871.7,345.9 875.2,345.5 878.6,345.2 C882.1,344.8 885.6,344.6 889.1,344.4 C892.6,344.2 896.0,344.1 899.5,344.0 C903.0,344.0 901.4,343.7 910.0,344.1 C918.6,344.5 936.2,345.7 951.2,346.6 C966.2,347.5 985.2,348.7 1000.0,349.6 C1014.8,350.5 1027.8,351.2 1040.0,351.8 C1052.2,352.4 1066.1,352.7 1073.1,353.2 C1080.1,353.7 1079.2,354.1 1082.1,354.6 C1085.1,355.2 1088.0,355.8 1090.9,356.5 C1093.8,357.2 1096.6,358.0 1099.4,358.8 C1102.1,359.7 1104.8,360.6 1107.5,361.6 C1110.1,362.6 1112.7,363.7 1115.2,364.8 C1117.7,366.0 1120.1,367.2 1122.4,368.5 C1124.7,369.7 1127.0,371.1 1129.2,372.5 C1131.3,373.9 1133.4,375.3 1135.4,376.8 C1137.4,378.3 1139.3,379.9 1141.0,381.5 C1142.8,383.1 1144.5,384.8 1146.1,386.5 C1147.7,388.2 1149.1,390.0 1150.5,391.8 C1151.9,393.6 1153.1,395.5 1154.3,397.4 C1155.4,399.2 1156.4,401.2 1157.3,403.1 C1158.2,405.0 1159.0,407.0 1159.7,409.0 C1160.4,411.0 1160.9,413.1 1161.4,415.1 C1161.8,417.1 1162.1,419.2 1162.3,421.3 C1162.5,423.4 1162.6,425.5 1162.5,427.5 C1162.5,429.6 1162.3,431.7 1162.0,433.8 C1161.7,435.9 1161.3,438.1 1160.7,440.1 C1160.2,442.2 1159.5,444.3 1158.8,446.4 C1158.0,448.5 1157.1,450.5 1156.1,452.6 C1155.1,454.6 1154.0,456.7 1152.7,458.7 C1151.5,460.7 1150.1,462.7 1148.7,464.6 C1147.2,466.6 1144.8,469.4 1144.0,470.4 L1054.4,543.8 L1054.4,543.8 C1052.2,545.4 1045.1,551.0 1041.0,553.7 C1036.9,556.4 1033.4,557.8 1030.0,559.8 C1026.6,561.9 1023.9,564.0 1020.8,566.0 C1017.7,567.9 1014.5,569.9 1011.3,571.7 C1008.0,573.6 1004.7,575.4 1001.3,577.1 C998.0,578.8 994.6,580.5 991.1,582.1 C987.6,583.7 984.1,585.2 980.6,586.6 C977.0,588.1 973.4,589.4 969.8,590.7 C966.2,592.0 962.5,593.2 958.8,594.4 C955.1,595.5 951.4,596.6 947.6,597.5 C943.9,598.5 940.1,599.4 936.3,600.3 C932.5,601.1 928.7,601.8 924.9,602.5 C921.1,603.1 917.3,603.7 913.4,604.2 C909.6,604.7 905.8,605.1 902.0,605.4 C898.1,605.7 894.3,606.0 890.5,606.1 C886.7,606.3 882.8,606.3 879.1,606.3 C875.3,606.3 871.5,606.2 867.7,606.0 C864.0,605.8 860.3,605.6 856.6,605.2 C852.9,604.9 849.2,604.4 845.5,603.9 C841.9,603.4 838.3,602.8 834.7,602.1 C831.2,601.4 827.7,600.6 824.2,599.8 C820.7,598.9 817.3,598.0 813.9,597.0 C810.5,596.0 807.2,594.9 804.0,593.7 C800.7,592.6 797.5,591.3 794.4,590.0 C791.2,588.7 788.2,587.3 785.2,585.8 C782.2,584.3 779.2,582.8 776.4,581.2 C773.5,579.6 770.7,577.9 768.0,576.1 C765.3,574.4 762.7,572.6 760.1,570.7 C757.6,568.8 755.2,566.8 752.8,564.8 C750.4,562.8 748.1,560.8 745.9,558.6 C743.8,556.5 741.7,554.3 739.7,552.1 C737.7,549.9 735.8,547.6 734.0,545.2 C732.1,542.9 730.4,540.5 728.8,538.0 C727.2,535.6 725.7,533.1 724.3,530.6 C722.9,528.1 721.6,525.5 720.5,522.9 C719.3,520.3 718.2,517.7 717.2,515.0 C716.2,512.3 715.4,509.6 714.6,506.9 C713.9,504.2 713.0,500.0 712.7,498.6 Z" fill="#ae2c00" stroke="#1c0600" stroke-width="0.75" stroke-linejoin="round"/>
<path d="M892.9,373.1 A34.5,24.2 0 1 0 961.9,373.1 A34.5,24.2 0 1 0 892.9,373.1Z" fill="url(#sb1gr)" stroke="#1c0600" stroke-width="0.75"/>
<path d="M913.7,391.7 C914.0,391.8 914.9,392.1 915.5,392.2 C916.1,392.4 916.8,392.6 917.4,392.7 C918.0,392.8 918.7,393.0 919.3,393.1 C919.9,393.2 920.6,393.3 921.2,393.4 C921.9,393.5 922.6,393.6 923.2,393.6 C923.9,393.7 924.5,393.7 925.2,393.8 C925.9,393.8 926.5,393.8 927.2,393.8 C927.8,393.8 928.5,393.8 929.2,393.8 C929.8,393.7 930.5,393.7 931.2,393.6 C931.8,393.6 932.5,393.5 933.1,393.4 C933.8,393.3 934.4,393.2 935.1,393.1 C935.7,393.0 936.4,392.9 937.0,392.8 C937.6,392.6 938.2,392.5 938.9,392.3 C939.5,392.1 940.1,391.9 940.7,391.8 C941.3,391.6 941.9,391.4 942.5,391.1 C943.1,390.9 943.6,390.7 944.2,390.4 C944.8,390.2 945.3,389.9 945.9,389.7 C946.4,389.4 946.9,389.1 947.5,388.8 C948.0,388.5 948.5,388.2 949.0,387.9 C949.5,387.6 949.9,387.3 950.4,387.0 C950.9,386.6 951.3,386.3 951.7,385.9 C952.2,385.6 952.6,385.2 953.0,384.8 C953.4,384.5 953.8,384.1 954.1,383.7 C954.5,383.3 955.0,382.7 955.2,382.5 " fill="none" stroke="url(#sb1h1)" stroke-width="3.4" filter="url(#b1)" stroke-linecap="round"/>
<path d="M924.5,393.7 C924.7,393.7 925.3,393.8 925.7,393.8 C926.1,393.8 926.4,393.8 926.8,393.8 C927.2,393.8 927.6,393.8 928.0,393.8 C928.4,393.8 928.8,393.8 929.2,393.8 C929.6,393.7 930.0,393.7 930.3,393.7 C930.7,393.7 931.1,393.6 931.5,393.6 C931.9,393.6 932.3,393.5 932.7,393.5 C933.0,393.4 933.4,393.4 933.8,393.3 C934.2,393.3 934.6,393.2 935.0,393.2 C935.3,393.1 935.7,393.0 936.1,392.9 C936.5,392.9 936.8,392.8 937.2,392.7 C937.6,392.6 937.9,392.5 938.3,392.4 C938.7,392.3 939.0,392.2 939.4,392.1 C939.8,392.0 940.1,391.9 940.5,391.8 C940.8,391.7 941.2,391.6 941.5,391.5 C941.9,391.4 942.2,391.2 942.6,391.1 C942.9,391.0 943.3,390.8 943.6,390.7 C943.9,390.6 944.3,390.4 944.6,390.3 C944.9,390.1 945.3,390.0 945.6,389.8 C945.9,389.7 946.2,389.5 946.5,389.3 C946.8,389.2 947.2,389.0 947.5,388.8 C947.8,388.7 948.1,388.5 948.4,388.3 C948.6,388.1 948.9,388.0 949.2,387.8 C949.5,387.6 949.9,387.3 950.1,387.2 " fill="none" stroke="url(#sb1h1b)" stroke-width="1.4" filter="url(#b1)" stroke-linecap="round"/>
<path d="M900.8,355.4 L897.3,369.4 A29.9,20.9 0 0 0 957.1,369.4 L952.0,355.4Z" fill="url(#sb1gw)" stroke="#1c0600" stroke-width="0.75"/>
<path d="M900.8,355.4 A25.6,17.2 0 0 0 952.0,355.4 L951.8,352.4 A25.4,16.2 0 0 0 901.0,352.4Z" fill="url(#sb1gf)" stroke="#1c0600" stroke-width="0.75"/>
<path d="M915.2,367.8 C915.4,367.9 916.1,368.1 916.6,368.2 C917.1,368.4 917.6,368.5 918.1,368.7 C918.6,368.8 919.1,368.9 919.6,369.0 C920.1,369.1 920.6,369.2 921.1,369.3 C921.6,369.3 922.2,369.4 922.7,369.5 C923.2,369.5 923.7,369.5 924.3,369.6 C924.8,369.6 925.3,369.6 925.9,369.6 C926.4,369.6 926.9,369.6 927.5,369.6 C928.0,369.6 928.5,369.6 929.0,369.5 C929.6,369.5 930.1,369.4 930.6,369.4 C931.1,369.3 931.6,369.2 932.2,369.1 C932.7,369.0 933.2,368.9 933.7,368.8 C934.2,368.7 934.7,368.6 935.2,368.4 C935.7,368.3 936.2,368.2 936.6,368.0 C937.1,367.8 937.6,367.7 938.0,367.5 C938.5,367.3 938.9,367.1 939.4,366.9 C939.8,366.7 940.2,366.5 940.7,366.3 C941.1,366.1 941.5,365.8 941.9,365.6 C942.3,365.4 942.7,365.1 943.0,364.9 C943.4,364.6 943.8,364.3 944.1,364.1 C944.5,363.8 944.8,363.5 945.1,363.2 C945.4,362.9 945.7,362.7 946.0,362.4 C946.3,362.1 946.6,361.7 946.8,361.4 C947.1,361.1 947.4,360.6 947.5,360.5 " fill="none" stroke="url(#sb1h2)" stroke-width="4" filter="url(#b1)" stroke-linecap="round"/>
<path d="M922.9,369.5 C923.1,369.5 923.6,369.5 923.9,369.6 C924.2,369.6 924.5,369.6 924.9,369.6 C925.2,369.6 925.5,369.6 925.8,369.6 C926.1,369.6 926.4,369.6 926.8,369.6 C927.1,369.6 927.4,369.6 927.7,369.6 C928.0,369.6 928.4,369.6 928.7,369.5 C929.0,369.5 929.3,369.5 929.6,369.5 C929.9,369.4 930.3,369.4 930.6,369.4 C930.9,369.3 931.2,369.3 931.5,369.2 C931.8,369.2 932.1,369.1 932.4,369.1 C932.8,369.0 933.1,368.9 933.4,368.9 C933.7,368.8 934.0,368.7 934.3,368.7 C934.6,368.6 934.9,368.5 935.2,368.4 C935.5,368.4 935.7,368.3 936.0,368.2 C936.3,368.1 936.6,368.0 936.9,367.9 C937.2,367.8 937.5,367.7 937.7,367.6 C938.0,367.5 938.3,367.4 938.6,367.3 C938.8,367.2 939.1,367.0 939.4,366.9 C939.6,366.8 939.9,366.7 940.2,366.5 C940.4,366.4 940.7,366.3 940.9,366.2 C941.2,366.0 941.4,365.9 941.7,365.7 C941.9,365.6 942.1,365.5 942.4,365.3 C942.6,365.2 942.8,365.0 943.1,364.9 C943.3,364.7 943.6,364.5 943.7,364.4 " fill="none" stroke="url(#sb1h2b)" stroke-width="1.8" filter="url(#b1)" stroke-linecap="round"/>
<path d="M905.0,351.8 A21.0,14.2 0 1 0 947.0,351.8 A21.0,14.2 0 1 0 905.0,351.8Z" fill="#ae2c00" stroke="#1c0600" stroke-width="0.75"/>
<g transform="rotate(1.5 1059.5 424.6)">
<path d="M988.1,424.6 A71.3,53.7 0 1 0 1130.8,424.6 A71.3,53.7 0 1 0 988.1,424.6Z" fill="#ae2e00" stroke="#1c0600" stroke-width="0.75"/>
<g clip-path="url(#rbcd)">
<path d="M1074.8,375.0 C1075.6,375.2 1077.9,375.6 1079.3,376.0 C1080.8,376.4 1082.3,376.8 1083.7,377.3 C1085.2,377.8 1086.6,378.3 1088.0,378.9 C1089.3,379.4 1090.7,380.0 1092.0,380.7 C1093.3,381.3 1094.6,382.0 1095.8,382.7 C1097.1,383.4 1098.3,384.2 1099.4,385.0 C1100.6,385.8 1101.7,386.6 1102.8,387.4 C1103.9,388.3 1104.9,389.2 1105.9,390.1 C1106.8,391.0 1107.8,391.9 1108.6,392.9 C1109.5,393.9 1110.3,394.9 1111.1,395.9 C1111.9,396.9 1112.6,397.9 1113.2,399.0 C1113.9,400.0 1114.5,401.1 1115.0,402.2 C1115.6,403.3 1116.1,404.4 1116.5,405.5 C1116.9,406.7 1117.3,407.8 1117.5,408.9 C1117.8,410.1 1118.1,411.2 1118.2,412.4 C1118.4,413.6 1118.5,414.7 1118.6,415.9 C1118.6,417.0 1118.6,418.2 1118.5,419.4 C1118.4,420.5 1118.3,421.7 1118.1,422.8 C1117.9,424.0 1117.6,425.2 1117.3,426.3 C1117.0,427.4 1116.6,428.6 1116.1,429.7 C1115.7,430.8 1115.2,431.9 1114.6,433.0 C1114.0,434.1 1113.4,435.1 1112.7,436.2 C1112.0,437.2 1111.3,438.2 1110.5,439.2 C1109.7,440.3 1108.3,441.7 1107.9,442.2 " fill="none" stroke="#6a1a00" stroke-width="7" filter="url(#b2)" opacity="0.9" stroke-linecap="round"/>
<path d="M1107.9,442.2 C1107.4,442.7 1106.0,444.2 1104.9,445.1 C1103.9,446.0 1102.8,446.9 1101.6,447.8 C1100.5,448.7 1099.2,449.5 1098.0,450.3 C1096.7,451.1 1095.5,451.8 1094.1,452.5 C1092.8,453.2 1091.4,453.9 1090.0,454.5 C1088.6,455.2 1087.1,455.8 1085.7,456.3 C1084.2,456.8 1082.7,457.3 1081.2,457.8 C1079.6,458.2 1078.1,458.6 1076.5,459.0 C1074.9,459.3 1073.3,459.6 1071.7,459.9 C1070.1,460.1 1068.5,460.3 1066.8,460.5 C1065.2,460.6 1063.6,460.7 1061.9,460.8 C1060.3,460.8 1058.6,460.8 1057.0,460.8 C1055.3,460.7 1053.7,460.6 1052.1,460.4 C1050.4,460.3 1048.8,460.1 1047.2,459.8 C1045.6,459.6 1044.0,459.3 1042.4,458.9 C1040.8,458.6 1039.3,458.2 1037.7,457.7 C1036.2,457.3 1034.7,456.8 1033.2,456.2 C1031.8,455.7 1030.3,455.1 1028.9,454.5 C1027.5,453.8 1026.1,453.2 1024.8,452.4 C1023.5,451.7 1022.2,451.0 1020.9,450.2 C1019.7,449.4 1018.5,448.5 1017.3,447.7 C1016.2,446.8 1015.1,445.9 1014.0,445.0 C1013.0,444.0 1012.0,443.1 1011.1,442.1 C1010.1,441.1 1008.9,439.5 1008.4,439.0 " fill="none" stroke="#7e2200" stroke-width="5" filter="url(#b15)" opacity="0.8" stroke-linecap="round"/>
<path d="M1049.3,460.1 C1048.2,459.9 1044.9,459.5 1042.7,459.0 C1040.5,458.5 1038.4,457.9 1036.3,457.3 C1034.2,456.6 1032.2,455.9 1030.2,455.0 C1028.3,454.2 1026.4,453.3 1024.6,452.3 C1022.7,451.3 1021.0,450.3 1019.3,449.1 C1017.7,448.0 1016.1,446.8 1014.6,445.5 C1013.2,444.2 1011.8,442.9 1010.5,441.5 C1009.3,440.1 1008.1,438.7 1007.1,437.2 C1006.1,435.7 1005.1,434.2 1004.3,432.6 C1003.5,431.1 1002.8,429.5 1002.3,427.8 C1001.7,426.2 1001.3,424.6 1001.0,422.9 C1000.7,421.3 1000.5,419.6 1000.5,417.9 C1000.5,416.2 1000.6,414.6 1000.8,412.9 C1001.0,411.2 1001.4,409.6 1001.8,408.0 C1002.3,406.3 1002.9,404.7 1003.6,403.1 C1004.4,401.5 1005.2,400.0 1006.2,398.5 C1007.1,397.0 1008.2,395.5 1009.4,394.1 C1010.6,392.7 1011.9,391.3 1013.3,390.0 C1014.7,388.7 1016.3,387.4 1017.9,386.2 C1019.5,385.1 1021.2,383.9 1022.9,382.9 C1024.7,381.9 1026.6,380.9 1028.5,380.0 C1030.4,379.2 1032.4,378.4 1034.4,377.6 C1036.5,376.9 1038.6,376.3 1040.7,375.8 C1042.9,375.2 1046.2,374.7 1047.3,374.5 " fill="none" stroke="url(#bs1)" stroke-width="9" filter="url(#b2)" opacity="1" stroke-linecap="round"/>
<path d="M1022.5,460.0 C1023.1,460.3 1025.1,461.3 1026.4,461.9 C1027.7,462.5 1029.1,463.0 1030.5,463.6 C1031.9,464.1 1033.3,464.6 1034.8,465.0 C1036.2,465.5 1037.7,465.9 1039.2,466.2 C1040.7,466.6 1042.2,466.9 1043.7,467.2 C1045.2,467.5 1046.7,467.7 1048.3,467.9 C1049.8,468.1 1051.4,468.3 1052.9,468.4 C1054.5,468.5 1056.1,468.6 1057.6,468.7 C1059.2,468.7 1060.8,468.7 1062.3,468.6 C1063.9,468.6 1065.4,468.5 1067.0,468.3 C1068.6,468.2 1070.1,468.0 1071.6,467.8 C1073.2,467.6 1074.7,467.3 1076.2,467.0 C1077.7,466.7 1079.2,466.4 1080.7,466.0 C1082.2,465.6 1083.6,465.2 1085.1,464.7 C1086.5,464.3 1087.9,463.8 1089.3,463.2 C1090.7,462.7 1092.1,462.1 1093.4,461.5 C1094.7,460.9 1096.0,460.2 1097.3,459.6 C1098.6,458.9 1099.8,458.2 1101.0,457.4 C1102.2,456.7 1103.4,455.9 1104.5,455.1 C1105.6,454.3 1106.7,453.4 1107.8,452.5 C1108.8,451.7 1109.8,450.8 1110.7,449.8 C1111.7,448.9 1112.6,448.0 1113.5,447.0 C1114.3,446.0 1115.1,445.0 1115.9,444.0 C1116.7,443.0 1117.7,441.4 1118.0,440.9 " fill="none" stroke="url(#rbh1)" stroke-width="6" filter="url(#b2)" stroke-linecap="round"/>
<path d="M1048.3,467.9 C1048.8,468.0 1050.1,468.2 1051.1,468.3 C1052.0,468.4 1052.9,468.4 1053.9,468.5 C1054.8,468.6 1055.7,468.6 1056.7,468.6 C1057.6,468.7 1058.6,468.7 1059.5,468.7 C1060.4,468.7 1061.4,468.7 1062.3,468.6 C1063.3,468.6 1064.2,468.6 1065.1,468.5 C1066.1,468.4 1067.0,468.4 1067.9,468.3 C1068.9,468.2 1069.8,468.1 1070.7,467.9 C1071.6,467.8 1072.6,467.7 1073.5,467.5 C1074.4,467.4 1075.3,467.2 1076.2,467.0 C1077.1,466.9 1078.0,466.7 1078.9,466.4 C1079.8,466.2 1080.7,466.0 1081.6,465.8 C1082.5,465.5 1083.4,465.3 1084.2,465.0 C1085.1,464.7 1085.9,464.5 1086.8,464.2 C1087.7,463.9 1088.5,463.6 1089.3,463.2 C1090.2,462.9 1091.0,462.6 1091.8,462.2 C1092.6,461.9 1093.4,461.5 1094.2,461.1 C1095.0,460.8 1095.8,460.4 1096.5,460.0 C1097.3,459.6 1098.1,459.2 1098.8,458.7 C1099.6,458.3 1100.3,457.9 1101.0,457.4 C1101.7,457.0 1102.4,456.5 1103.1,456.0 C1103.8,455.6 1104.5,455.1 1105.2,454.6 C1105.8,454.1 1106.5,453.6 1107.1,453.1 C1107.8,452.5 1108.7,451.7 1109.0,451.5 " fill="none" stroke="url(#rbh1b)" stroke-width="2.4" filter="url(#b1)" stroke-linecap="round"/>
</g>
<path d="M1000.5,417.1 A59.0,43.7 0 1 0 1118.6,417.1 A59.0,43.7 0 1 0 1000.5,417.1Z" fill="url(#rbgc)" stroke="#1c0600" stroke-width="0.75"/>
<path d="M1000.9,413.4 A58.4,41.3 0 1 0 1117.7,413.4 A58.4,41.3 0 1 0 1000.9,413.4Z" fill="#ae2e00" stroke="#1c0600" stroke-width="0.75"/>
<g clip-path="url(#rbcb)">
<path d="M1069.4,372.6 C1070.2,372.7 1072.5,373.1 1074.0,373.3 C1075.5,373.6 1077.0,373.9 1078.5,374.3 C1079.9,374.7 1081.4,375.1 1082.8,375.5 C1084.2,375.9 1085.6,376.4 1087.0,377.0 C1088.4,377.5 1089.7,378.0 1091.0,378.6 C1092.3,379.2 1093.6,379.9 1094.9,380.5 C1096.1,381.2 1097.3,381.9 1098.4,382.7 C1099.6,383.4 1100.7,384.2 1101.8,385.0 C1102.8,385.8 1103.9,386.6 1104.8,387.5 C1105.8,388.3 1106.7,389.2 1107.6,390.1 C1108.5,391.0 1109.3,392.0 1110.1,392.9 C1110.9,393.9 1111.6,394.9 1112.2,395.9 C1112.9,396.9 1113.5,397.9 1114.0,398.9 C1114.6,400.0 1115.1,401.0 1115.5,402.1 C1115.9,403.1 1116.3,404.2 1116.6,405.3 C1116.9,406.4 1117.1,407.5 1117.3,408.5 C1117.5,409.6 1117.6,410.7 1117.7,411.8 C1117.7,412.9 1117.7,414.1 1117.6,415.2 C1117.6,416.3 1117.4,417.4 1117.3,418.4 C1117.1,419.5 1116.8,420.6 1116.5,421.7 C1116.2,422.8 1115.8,423.9 1115.4,424.9 C1114.9,426.0 1114.4,427.0 1113.9,428.1 C1113.3,429.1 1112.7,430.1 1112.0,431.1 C1111.4,432.1 1110.2,433.5 1109.9,434.0 " fill="none" stroke="#5e1600" stroke-width="8" filter="url(#b2)" opacity="0.9" stroke-linecap="round"/>
<path d="M1114.2,427.5 C1113.8,428.1 1112.7,430.1 1111.9,431.4 C1111.0,432.6 1110.0,433.9 1109.0,435.1 C1108.0,436.3 1106.8,437.4 1105.6,438.5 C1104.4,439.6 1103.1,440.7 1101.8,441.7 C1100.4,442.7 1099.0,443.7 1097.5,444.6 C1096.0,445.6 1094.4,446.4 1092.8,447.2 C1091.2,448.0 1089.5,448.8 1087.8,449.5 C1086.0,450.1 1084.2,450.8 1082.4,451.3 C1080.6,451.9 1078.7,452.4 1076.9,452.8 C1075.0,453.2 1073.0,453.6 1071.1,453.8 C1069.2,454.1 1067.2,454.3 1065.2,454.5 C1063.3,454.6 1061.3,454.7 1059.3,454.7 C1057.3,454.7 1055.3,454.6 1053.4,454.5 C1051.4,454.3 1049.4,454.1 1047.5,453.8 C1045.6,453.6 1043.6,453.2 1041.7,452.8 C1039.9,452.4 1038.0,451.9 1036.2,451.3 C1034.4,450.8 1032.6,450.1 1030.8,449.5 C1029.1,448.8 1027.4,448.0 1025.8,447.2 C1024.2,446.4 1022.6,445.6 1021.1,444.6 C1019.6,443.7 1018.2,442.7 1016.8,441.7 C1015.5,440.7 1014.2,439.6 1013.0,438.5 C1011.8,437.4 1010.6,436.3 1009.6,435.1 C1008.6,433.9 1007.6,432.6 1006.7,431.4 C1005.9,430.1 1004.8,428.1 1004.4,427.5 " fill="none" stroke="#701c00" stroke-width="8" filter="url(#b2)" opacity="0.95" stroke-linecap="round"/>
<path d="M1051.2,454.3 C1050.0,454.1 1046.6,453.7 1044.3,453.3 C1042.1,452.9 1039.9,452.4 1037.7,451.8 C1035.6,451.2 1033.5,450.5 1031.4,449.7 C1029.4,448.9 1027.4,448.0 1025.5,447.1 C1023.6,446.1 1021.8,445.1 1020.1,444.0 C1018.4,442.9 1016.7,441.7 1015.2,440.5 C1013.7,439.2 1012.3,437.9 1011.0,436.6 C1009.7,435.2 1008.5,433.8 1007.4,432.3 C1006.4,430.9 1005.4,429.4 1004.6,427.8 C1003.8,426.3 1003.1,424.7 1002.6,423.1 C1002.0,421.5 1001.6,419.9 1001.3,418.3 C1001.0,416.6 1000.9,415.0 1000.9,413.4 C1000.9,411.7 1001.0,410.1 1001.3,408.4 C1001.6,406.8 1002.0,405.2 1002.6,403.6 C1003.1,402.0 1003.8,400.4 1004.6,398.9 C1005.4,397.3 1006.4,395.8 1007.4,394.4 C1008.5,392.9 1009.7,391.5 1011.0,390.1 C1012.3,388.8 1013.7,387.5 1015.2,386.2 C1016.7,385.0 1018.4,383.8 1020.1,382.7 C1021.8,381.6 1023.6,380.6 1025.5,379.6 C1027.4,378.7 1029.4,377.8 1031.4,377.0 C1033.5,376.2 1035.6,375.5 1037.7,374.9 C1039.9,374.3 1042.1,373.8 1044.3,373.4 C1046.6,373.0 1050.0,372.6 1051.2,372.4 " fill="none" stroke="url(#bs2)" stroke-width="10" filter="url(#b2)" opacity="1" stroke-linecap="round"/>
<path d="M1026.8,438.6 C1027.3,438.9 1028.9,439.7 1030.0,440.2 C1031.1,440.7 1032.3,441.2 1033.5,441.7 C1034.6,442.1 1035.8,442.6 1037.0,442.9 C1038.2,443.3 1039.4,443.7 1040.7,444.0 C1041.9,444.3 1043.2,444.6 1044.5,444.9 C1045.8,445.1 1047.1,445.4 1048.4,445.6 C1049.7,445.7 1051.0,445.9 1052.3,446.0 C1053.6,446.1 1055.0,446.2 1056.3,446.2 C1057.6,446.3 1058.9,446.3 1060.3,446.3 C1061.6,446.2 1062.9,446.2 1064.3,446.1 C1065.6,446.0 1066.9,445.8 1068.2,445.7 C1069.5,445.5 1070.8,445.3 1072.1,445.0 C1073.4,444.8 1074.7,444.5 1075.9,444.2 C1077.2,443.9 1078.4,443.6 1079.6,443.2 C1080.8,442.8 1082.0,442.4 1083.2,442.0 C1084.4,441.5 1085.5,441.0 1086.7,440.5 C1087.8,440.0 1088.9,439.5 1089.9,438.9 C1091.0,438.4 1092.0,437.8 1093.0,437.2 C1094.0,436.5 1095.0,435.9 1095.9,435.2 C1096.8,434.6 1097.7,433.9 1098.6,433.1 C1099.4,432.4 1100.2,431.7 1101.0,430.9 C1101.8,430.2 1102.5,429.4 1103.2,428.6 C1103.9,427.8 1104.5,427.0 1105.1,426.1 C1105.7,425.3 1106.5,424.0 1106.7,423.6 " fill="none" stroke="url(#rbh2)" stroke-width="7" filter="url(#b2)" stroke-linecap="round"/>
<path d="M1047.9,445.5 C1048.3,445.5 1049.5,445.7 1050.3,445.8 C1051.1,445.9 1051.9,446.0 1052.7,446.0 C1053.5,446.1 1054.3,446.2 1055.1,446.2 C1055.9,446.2 1056.7,446.3 1057.5,446.3 C1058.3,446.3 1059.1,446.3 1059.9,446.3 C1060.7,446.3 1061.5,446.2 1062.3,446.2 C1063.1,446.2 1063.9,446.1 1064.7,446.0 C1065.5,446.0 1066.3,445.9 1067.1,445.8 C1067.9,445.7 1068.7,445.6 1069.5,445.5 C1070.3,445.4 1071.0,445.2 1071.8,445.1 C1072.6,445.0 1073.4,444.8 1074.1,444.6 C1074.9,444.5 1075.7,444.3 1076.4,444.1 C1077.2,443.9 1077.9,443.7 1078.7,443.5 C1079.4,443.3 1080.1,443.0 1080.9,442.8 C1081.6,442.6 1082.3,442.3 1083.0,442.0 C1083.7,441.8 1084.4,441.5 1085.1,441.2 C1085.8,440.9 1086.5,440.6 1087.2,440.3 C1087.8,440.0 1088.5,439.7 1089.1,439.3 C1089.8,439.0 1090.4,438.7 1091.1,438.3 C1091.7,438.0 1092.3,437.6 1092.9,437.2 C1093.5,436.9 1094.1,436.5 1094.7,436.1 C1095.3,435.7 1095.8,435.3 1096.4,434.9 C1096.9,434.5 1097.5,434.1 1098.0,433.6 C1098.5,433.2 1099.3,432.5 1099.5,432.3 " fill="none" stroke="url(#rbh2b)" stroke-width="3" filter="url(#b1)" stroke-linecap="round"/>
</g>
<path d="M1000.9,413.4 A58.4,41.3 0 1 0 1117.7,413.4 A58.4,41.3 0 1 0 1000.9,413.4Z" fill="none" stroke="#1c0600" stroke-width="0.75"/>
<path d="M1011.8,407.2 A46.4,32.2 0 1 0 1104.6,407.2 A46.4,32.2 0 1 0 1011.8,407.2Z" fill="#ae2c00" stroke="#1c0600" stroke-width="0.75"/>
</g>
<path d="M1036.3,371.25 L1039.8,406.69751243781093 A18.8,13.7 0 0 0 1077.4,406.69751243781093 L1076.5,371.25Z" fill="url(#rpg)" stroke="#1c0600" stroke-width="0.75"/>
<path d="M1036.3,371.2 A20.1,14.6 0 1 0 1076.5,371.2 A20.1,14.6 0 1 0 1036.3,371.2Z" fill="#fd0000" stroke="#1c0600" stroke-width="0.75"/>
<g transform="rotate(1.5 894.0 471.9)">
<path d="M792.1,471.9 A101.8,75.9 0 1 0 995.8,471.9 A101.8,75.9 0 1 0 792.1,471.9Z" fill="#ae2e00" stroke="#1c0600" stroke-width="0.75"/>
<g clip-path="url(#lbcd)">
<path d="M917.3,400.8 C918.4,401.0 921.9,401.8 924.2,402.4 C926.4,403.0 928.7,403.6 930.8,404.4 C933.0,405.1 935.2,405.9 937.3,406.7 C939.4,407.6 941.5,408.5 943.5,409.5 C945.5,410.5 947.4,411.5 949.3,412.6 C951.2,413.7 953.0,414.8 954.8,416.0 C956.6,417.3 958.3,418.5 959.9,419.8 C961.5,421.1 963.1,422.5 964.6,423.9 C966.1,425.3 967.5,426.7 968.8,428.2 C970.2,429.7 971.4,431.2 972.6,432.7 C973.8,434.3 974.8,435.9 975.8,437.5 C976.8,439.1 977.8,440.8 978.6,442.5 C979.4,444.1 980.1,445.8 980.8,447.5 C981.4,449.3 981.9,451.0 982.4,452.7 C982.8,454.5 983.2,456.3 983.5,458.0 C983.7,459.8 983.9,461.6 984.0,463.4 C984.0,465.1 984.0,466.9 983.9,468.7 C983.8,470.5 983.5,472.3 983.2,474.0 C982.9,475.8 982.5,477.5 982.0,479.3 C981.5,481.0 980.9,482.8 980.2,484.5 C979.5,486.2 978.7,487.9 977.9,489.5 C977.0,491.2 976.1,492.8 975.0,494.4 C974.0,496.0 972.8,497.6 971.6,499.1 C970.4,500.7 968.4,502.9 967.7,503.6 " fill="none" stroke="#6a1a00" stroke-width="7" filter="url(#b2)" opacity="0.9" stroke-linecap="round"/>
<path d="M967.7,503.6 C967.0,504.4 964.8,506.6 963.2,508.1 C961.6,509.5 959.9,510.9 958.1,512.2 C956.3,513.5 954.5,514.8 952.6,516.0 C950.7,517.2 948.7,518.4 946.7,519.5 C944.7,520.5 942.6,521.6 940.4,522.5 C938.3,523.5 936.1,524.4 933.8,525.2 C931.6,526.0 929.3,526.8 926.9,527.5 C924.6,528.2 922.2,528.8 919.8,529.3 C917.4,529.8 915.0,530.3 912.5,530.7 C910.1,531.1 907.6,531.4 905.1,531.6 C902.6,531.8 900.1,532.0 897.6,532.0 C895.1,532.1 892.6,532.1 890.1,532.0 C887.6,532.0 885.1,531.8 882.6,531.6 C880.1,531.3 877.6,531.0 875.2,530.6 C872.7,530.2 870.3,529.8 867.9,529.2 C865.5,528.7 863.1,528.1 860.8,527.4 C858.4,526.7 856.1,525.9 853.9,525.1 C851.7,524.3 849.5,523.4 847.3,522.4 C845.2,521.4 843.1,520.4 841.0,519.3 C839.0,518.2 837.0,517.1 835.2,515.8 C833.3,514.6 831.4,513.3 829.7,512.0 C827.9,510.7 826.2,509.3 824.6,507.9 C823.0,506.4 821.5,504.9 820.1,503.4 C818.7,501.9 816.7,499.5 816.1,498.7 " fill="none" stroke="#7e2200" stroke-width="5" filter="url(#b15)" opacity="0.8" stroke-linecap="round"/>
<path d="M878.4,531.1 C876.7,530.8 871.6,530.1 868.3,529.3 C865.0,528.6 861.8,527.7 858.6,526.7 C855.4,525.7 852.3,524.6 849.3,523.3 C846.4,522.0 843.4,520.6 840.7,519.1 C837.9,517.6 835.2,516.0 832.7,514.2 C830.2,512.5 827.8,510.6 825.6,508.7 C823.3,506.7 821.2,504.7 819.3,502.6 C817.4,500.5 815.6,498.2 814.0,496.0 C812.5,493.7 811.1,491.4 809.8,489.0 C808.6,486.6 807.6,484.1 806.7,481.6 C805.9,479.2 805.2,476.6 804.8,474.1 C804.3,471.6 804.1,469.0 804.0,466.5 C804.0,463.9 804.1,461.3 804.4,458.8 C804.8,456.3 805.3,453.7 806.0,451.2 C806.7,448.7 807.7,446.2 808.8,443.8 C809.9,441.4 811.2,439.0 812.7,436.7 C814.1,434.4 815.8,432.2 817.6,430.0 C819.4,427.8 821.4,425.7 823.6,423.7 C825.7,421.7 828.0,419.8 830.5,418.0 C832.9,416.2 835.5,414.5 838.2,412.9 C840.9,411.3 843.7,409.8 846.6,408.5 C849.6,407.2 852.6,405.9 855.7,404.8 C858.8,403.8 862.1,402.8 865.3,402.0 C868.6,401.2 873.6,400.3 875.3,400.0 " fill="none" stroke="url(#bs3)" stroke-width="9" filter="url(#b2)" opacity="1" stroke-linecap="round"/>
<path d="M839.3,526.3 C840.3,526.8 843.1,528.2 845.1,529.1 C847.1,530.0 849.1,530.8 851.2,531.6 C853.3,532.4 855.4,533.1 857.5,533.7 C859.6,534.4 861.8,535.0 864.0,535.5 C866.2,536.1 868.4,536.5 870.6,537.0 C872.9,537.4 875.1,537.7 877.4,538.0 C879.7,538.3 882.0,538.6 884.3,538.8 C886.6,538.9 888.9,539.0 891.2,539.1 C893.5,539.1 895.8,539.1 898.1,539.1 C900.4,539.0 902.8,538.8 905.0,538.6 C907.3,538.4 909.6,538.2 911.9,537.9 C914.2,537.5 916.4,537.1 918.7,536.7 C920.9,536.3 923.1,535.8 925.3,535.2 C927.5,534.6 929.6,534.0 931.7,533.3 C933.9,532.6 935.9,531.9 938.0,531.1 C940.0,530.3 942.1,529.5 944.0,528.6 C946.0,527.7 947.9,526.7 949.8,525.7 C951.7,524.7 953.5,523.6 955.3,522.5 C957.0,521.4 958.7,520.3 960.4,519.1 C962.1,517.9 963.7,516.6 965.2,515.4 C966.7,514.1 968.2,512.8 969.6,511.4 C971.0,510.0 972.4,508.6 973.6,507.2 C974.9,505.8 976.1,504.3 977.2,502.8 C978.3,501.3 979.9,499.0 980.4,498.2 " fill="none" stroke="url(#lbh1)" stroke-width="6" filter="url(#b2)" stroke-linecap="round"/>
<path d="M877.4,538.0 C878.1,538.1 880.2,538.4 881.5,538.5 C882.9,538.6 884.3,538.8 885.7,538.9 C887.0,538.9 888.4,539.0 889.8,539.1 C891.2,539.1 892.6,539.1 894.0,539.1 C895.4,539.1 896.8,539.1 898.1,539.1 C899.5,539.0 900.9,538.9 902.3,538.9 C903.7,538.8 905.0,538.6 906.4,538.5 C907.8,538.4 909.2,538.2 910.5,538.0 C911.9,537.9 913.3,537.7 914.6,537.4 C916.0,537.2 917.3,537.0 918.7,536.7 C920.0,536.4 921.3,536.1 922.6,535.8 C924.0,535.5 925.3,535.2 926.6,534.8 C927.9,534.5 929.2,534.1 930.5,533.7 C931.7,533.3 933.0,532.9 934.3,532.5 C935.5,532.0 936.8,531.6 938.0,531.1 C939.2,530.6 940.4,530.1 941.6,529.6 C942.8,529.1 944.0,528.6 945.2,528.0 C946.4,527.5 947.5,526.9 948.7,526.3 C949.8,525.7 950.9,525.1 952.0,524.5 C953.1,523.8 954.2,523.2 955.3,522.5 C956.3,521.9 957.4,521.2 958.4,520.5 C959.4,519.8 960.4,519.1 961.4,518.4 C962.4,517.6 963.3,516.9 964.3,516.1 C965.2,515.4 966.5,514.2 967.0,513.8 " fill="none" stroke="url(#lbh1b)" stroke-width="2.4" filter="url(#b1)" stroke-linecap="round"/>
</g>
<path d="M804.0,465.3 A90.0,66.8 0 1 0 984.0,465.3 A90.0,66.8 0 1 0 804.0,465.3Z" fill="url(#lbgc)" stroke="#1c0600" stroke-width="0.75"/>
<path d="M804.0,461.9 A89.7,64.9 0 1 0 983.4,461.9 A89.7,64.9 0 1 0 804.0,461.9Z" fill="#ae2e00" stroke="#1c0600" stroke-width="0.75"/>
<g clip-path="url(#lbcb)">
<path d="M909.3,398.0 C910.4,398.2 914.0,398.7 916.3,399.1 C918.6,399.5 920.9,400.0 923.2,400.6 C925.4,401.2 927.6,401.8 929.8,402.5 C932.0,403.2 934.2,404.0 936.3,404.8 C938.4,405.6 940.4,406.5 942.4,407.4 C944.5,408.4 946.4,409.4 948.3,410.4 C950.2,411.5 952.0,412.6 953.8,413.7 C955.6,414.9 957.3,416.1 958.9,417.4 C960.6,418.6 962.2,419.9 963.7,421.3 C965.2,422.6 966.6,424.0 967.9,425.5 C969.3,426.9 970.5,428.4 971.7,429.9 C972.9,431.4 974.0,432.9 975.0,434.5 C976.0,436.0 976.9,437.6 977.8,439.3 C978.6,440.9 979.3,442.5 980.0,444.2 C980.6,445.9 981.2,447.5 981.7,449.2 C982.1,450.9 982.5,452.6 982.8,454.4 C983.1,456.1 983.3,457.8 983.3,459.5 C983.4,461.3 983.4,463.0 983.3,464.7 C983.2,466.5 983.0,468.2 982.7,469.9 C982.4,471.6 982.0,473.3 981.5,475.0 C981.1,476.7 980.5,478.4 979.8,480.1 C979.1,481.7 978.4,483.4 977.5,485.0 C976.7,486.6 975.7,488.2 974.7,489.8 C973.7,491.3 971.9,493.6 971.4,494.3 " fill="none" stroke="#5e1600" stroke-width="8" filter="url(#b2)" opacity="0.9" stroke-linecap="round"/>
<path d="M978.0,484.1 C977.4,485.1 975.8,488.2 974.4,490.2 C973.1,492.2 971.6,494.1 970.0,496.0 C968.4,497.8 966.7,499.7 964.9,501.4 C963.0,503.2 961.0,504.8 958.9,506.4 C956.9,508.0 954.7,509.6 952.4,511.0 C950.1,512.4 947.6,513.8 945.1,515.1 C942.7,516.3 940.1,517.5 937.4,518.6 C934.8,519.6 932.0,520.6 929.2,521.5 C926.4,522.4 923.6,523.1 920.7,523.8 C917.8,524.5 914.8,525.0 911.8,525.5 C908.9,525.9 905.8,526.2 902.8,526.5 C899.8,526.7 896.7,526.8 893.7,526.8 C890.7,526.8 887.6,526.7 884.6,526.5 C881.6,526.2 878.5,525.9 875.6,525.5 C872.6,525.0 869.6,524.5 866.7,523.8 C863.8,523.1 861.0,522.4 858.2,521.5 C855.4,520.6 852.6,519.6 850.0,518.6 C847.3,517.5 844.7,516.3 842.3,515.1 C839.8,513.8 837.3,512.4 835.0,511.0 C832.7,509.6 830.5,508.0 828.5,506.4 C826.4,504.8 824.4,503.2 822.5,501.4 C820.7,499.7 819.0,497.8 817.4,496.0 C815.8,494.1 814.3,492.2 813.0,490.2 C811.6,488.2 810.0,485.1 809.4,484.1 " fill="none" stroke="#701c00" stroke-width="8" filter="url(#b2)" opacity="0.95" stroke-linecap="round"/>
<path d="M881.2,526.2 C879.5,525.9 874.2,525.3 870.7,524.6 C867.3,524.0 863.9,523.2 860.6,522.2 C857.3,521.3 854.0,520.2 850.9,518.9 C847.8,517.7 844.7,516.3 841.8,514.8 C838.9,513.4 836.1,511.7 833.5,510.0 C830.8,508.3 828.3,506.4 826.0,504.5 C823.7,502.5 821.5,500.5 819.5,498.3 C817.5,496.2 815.6,494.0 814.0,491.7 C812.4,489.4 810.9,487.0 809.7,484.6 C808.4,482.2 807.4,479.7 806.5,477.2 C805.7,474.7 805.1,472.2 804.6,469.6 C804.2,467.1 804.0,464.5 804.0,461.9 C804.0,459.3 804.2,456.7 804.6,454.2 C805.1,451.6 805.7,449.1 806.5,446.6 C807.4,444.1 808.4,441.6 809.7,439.2 C810.9,436.8 812.4,434.4 814.0,432.1 C815.6,429.8 817.5,427.6 819.5,425.5 C821.5,423.3 823.7,421.3 826.0,419.3 C828.3,417.4 830.8,415.5 833.5,413.8 C836.1,412.1 838.9,410.4 841.8,409.0 C844.7,407.5 847.8,406.1 850.9,404.9 C854.0,403.6 857.3,402.5 860.6,401.6 C863.9,400.6 867.3,399.8 870.7,399.2 C874.2,398.5 879.5,397.9 881.2,397.6 " fill="none" stroke="url(#bs4)" stroke-width="10" filter="url(#b2)" opacity="1" stroke-linecap="round"/>
<path d="M842.5,504.7 C843.4,505.2 845.9,506.5 847.7,507.4 C849.4,508.2 851.2,509.0 853.1,509.7 C855.0,510.5 856.9,511.2 858.8,511.8 C860.7,512.4 862.7,513.0 864.7,513.5 C866.7,514.0 868.7,514.5 870.7,514.9 C872.8,515.3 874.8,515.7 876.9,516.0 C879.0,516.3 881.1,516.5 883.2,516.7 C885.3,516.9 887.4,517.0 889.6,517.1 C891.7,517.2 893.8,517.2 895.9,517.1 C898.0,517.1 900.2,517.0 902.3,516.8 C904.4,516.7 906.5,516.5 908.6,516.2 C910.7,515.9 912.7,515.6 914.8,515.2 C916.8,514.8 918.9,514.3 920.9,513.8 C922.9,513.3 924.9,512.8 926.8,512.2 C928.8,511.6 930.7,510.9 932.5,510.2 C934.4,509.5 936.2,508.7 938.0,507.9 C939.8,507.1 941.6,506.2 943.3,505.3 C944.9,504.4 946.6,503.4 948.2,502.4 C949.8,501.4 951.3,500.4 952.8,499.3 C954.3,498.2 955.7,497.1 957.0,495.9 C958.4,494.8 959.7,493.6 960.9,492.3 C962.1,491.1 963.3,489.8 964.4,488.6 C965.5,487.3 966.5,485.9 967.5,484.6 C968.4,483.2 969.6,481.1 970.1,480.5 " fill="none" stroke="url(#lbh2)" stroke-width="7" filter="url(#b2)" stroke-linecap="round"/>
<path d="M876.2,515.9 C876.8,516.0 878.7,516.3 880.0,516.4 C881.3,516.5 882.5,516.7 883.8,516.8 C885.1,516.9 886.4,517.0 887.6,517.0 C888.9,517.1 890.2,517.1 891.5,517.2 C892.8,517.2 894.0,517.2 895.3,517.2 C896.6,517.1 897.9,517.1 899.2,517.0 C900.4,517.0 901.7,516.9 903.0,516.8 C904.3,516.7 905.5,516.5 906.8,516.4 C908.1,516.3 909.3,516.1 910.6,515.9 C911.8,515.7 913.1,515.5 914.3,515.3 C915.6,515.0 916.8,514.8 918.0,514.5 C919.3,514.2 920.5,513.9 921.7,513.6 C922.9,513.3 924.1,513.0 925.3,512.6 C926.4,512.3 927.6,511.9 928.8,511.5 C929.9,511.1 931.1,510.7 932.2,510.3 C933.3,509.9 934.5,509.4 935.6,509.0 C936.7,508.5 937.8,508.0 938.8,507.5 C939.9,507.0 941.0,506.5 942.0,506.0 C943.0,505.4 944.1,504.9 945.1,504.3 C946.1,503.7 947.0,503.1 948.0,502.5 C949.0,501.9 949.9,501.3 950.8,500.7 C951.8,500.1 952.7,499.4 953.5,498.8 C954.4,498.1 955.3,497.4 956.1,496.7 C957.0,496.0 958.1,495.0 958.6,494.6 " fill="none" stroke="url(#lbh2b)" stroke-width="3" filter="url(#b1)" stroke-linecap="round"/>
</g>
<path d="M804.0,461.9 A89.7,64.9 0 1 0 983.4,461.9 A89.7,64.9 0 1 0 804.0,461.9Z" fill="none" stroke="#1c0600" stroke-width="0.75"/>
<path d="M816.2,455.6 A76.9,53.7 0 1 0 970.1,455.6 A76.9,53.7 0 1 0 816.2,455.6Z" fill="#ae2c00" stroke="#1c0600" stroke-width="0.75"/>
</g>
<path d="M850.7,418.75 L854.2,455.21677018633545 A39.3,27.6 0 0 0 932.8,455.21677018633545 L931.2,418.75Z" fill="url(#lcg)" stroke="#1c0600" stroke-width="0.75"/>
<path d="M850.7,418.8 A40.2,28.2 0 1 0 931.2,418.8 A40.2,28.2 0 1 0 850.7,418.8Z" fill="#fd0000" stroke="#1c0600" stroke-width="0.75"/>
<path d="M977.9,534.8 A34.5,24.2 0 1 0 1046.9,534.8 A34.5,24.2 0 1 0 977.9,534.8Z" fill="url(#sb2gr)" stroke="#1c0600" stroke-width="0.75"/>
<path d="M998.7,553.4 C999.0,553.5 999.9,553.8 1000.5,553.9 C1001.1,554.1 1001.8,554.3 1002.4,554.4 C1003.0,554.5 1003.7,554.7 1004.3,554.8 C1004.9,554.9 1005.6,555.0 1006.2,555.1 C1006.9,555.2 1007.6,555.3 1008.2,555.3 C1008.9,555.4 1009.5,555.4 1010.2,555.5 C1010.9,555.5 1011.5,555.5 1012.2,555.5 C1012.8,555.5 1013.5,555.5 1014.2,555.5 C1014.8,555.4 1015.5,555.4 1016.2,555.3 C1016.8,555.3 1017.5,555.2 1018.1,555.1 C1018.8,555.0 1019.4,554.9 1020.1,554.8 C1020.7,554.7 1021.4,554.6 1022.0,554.5 C1022.6,554.3 1023.2,554.2 1023.9,554.0 C1024.5,553.8 1025.1,553.6 1025.7,553.5 C1026.3,553.3 1026.9,553.1 1027.5,552.8 C1028.1,552.6 1028.6,552.4 1029.2,552.1 C1029.8,551.9 1030.3,551.6 1030.9,551.4 C1031.4,551.1 1031.9,550.8 1032.5,550.5 C1033.0,550.2 1033.5,549.9 1034.0,549.6 C1034.5,549.3 1034.9,549.0 1035.4,548.7 C1035.9,548.3 1036.3,548.0 1036.7,547.6 C1037.2,547.3 1037.6,546.9 1038.0,546.5 C1038.4,546.2 1038.8,545.8 1039.1,545.4 C1039.5,545.0 1040.0,544.4 1040.2,544.2 " fill="none" stroke="url(#sb2h1)" stroke-width="3.4" filter="url(#b1)" stroke-linecap="round"/>
<path d="M1009.5,555.4 C1009.7,555.4 1010.3,555.5 1010.7,555.5 C1011.1,555.5 1011.4,555.5 1011.8,555.5 C1012.2,555.5 1012.6,555.5 1013.0,555.5 C1013.4,555.5 1013.8,555.5 1014.2,555.5 C1014.6,555.4 1015.0,555.4 1015.3,555.4 C1015.7,555.4 1016.1,555.3 1016.5,555.3 C1016.9,555.3 1017.3,555.2 1017.7,555.2 C1018.0,555.1 1018.4,555.1 1018.8,555.0 C1019.2,555.0 1019.6,554.9 1020.0,554.9 C1020.3,554.8 1020.7,554.7 1021.1,554.6 C1021.5,554.6 1021.8,554.5 1022.2,554.4 C1022.6,554.3 1022.9,554.2 1023.3,554.1 C1023.7,554.0 1024.0,553.9 1024.4,553.8 C1024.8,553.7 1025.1,553.6 1025.5,553.5 C1025.8,553.4 1026.2,553.3 1026.5,553.2 C1026.9,553.1 1027.2,552.9 1027.6,552.8 C1027.9,552.7 1028.3,552.5 1028.6,552.4 C1028.9,552.3 1029.3,552.1 1029.6,552.0 C1029.9,551.8 1030.3,551.7 1030.6,551.5 C1030.9,551.4 1031.2,551.2 1031.5,551.0 C1031.8,550.9 1032.2,550.7 1032.5,550.5 C1032.8,550.4 1033.1,550.2 1033.4,550.0 C1033.6,549.8 1033.9,549.7 1034.2,549.5 C1034.5,549.3 1034.9,549.0 1035.1,548.9 " fill="none" stroke="url(#sb2h1b)" stroke-width="1.4" filter="url(#b1)" stroke-linecap="round"/>
<path d="M985.8,517.1 L982.3,531.1 A29.9,20.9 0 0 0 1042.1,531.1 L1037.0,517.1Z" fill="url(#sb2gw)" stroke="#1c0600" stroke-width="0.75"/>
<path d="M985.8,517.1 A25.6,17.2 0 0 0 1037.0,517.1 L1036.8,514.1 A25.4,16.2 0 0 0 986.0,514.1Z" fill="url(#sb2gf)" stroke="#1c0600" stroke-width="0.75"/>
<path d="M1000.2,529.5 C1000.4,529.6 1001.1,529.8 1001.6,529.9 C1002.1,530.1 1002.6,530.2 1003.1,530.4 C1003.6,530.5 1004.1,530.6 1004.6,530.7 C1005.1,530.8 1005.6,530.9 1006.1,531.0 C1006.6,531.0 1007.2,531.1 1007.7,531.2 C1008.2,531.2 1008.7,531.2 1009.3,531.3 C1009.8,531.3 1010.3,531.3 1010.9,531.3 C1011.4,531.3 1011.9,531.3 1012.5,531.3 C1013.0,531.3 1013.5,531.3 1014.0,531.2 C1014.6,531.2 1015.1,531.1 1015.6,531.1 C1016.1,531.0 1016.6,530.9 1017.2,530.8 C1017.7,530.7 1018.2,530.6 1018.7,530.5 C1019.2,530.4 1019.7,530.3 1020.2,530.1 C1020.7,530.0 1021.2,529.9 1021.6,529.7 C1022.1,529.5 1022.6,529.4 1023.0,529.2 C1023.5,529.0 1023.9,528.8 1024.4,528.6 C1024.8,528.4 1025.2,528.2 1025.7,528.0 C1026.1,527.8 1026.5,527.5 1026.9,527.3 C1027.3,527.1 1027.7,526.8 1028.0,526.6 C1028.4,526.3 1028.8,526.0 1029.1,525.8 C1029.5,525.5 1029.8,525.2 1030.1,524.9 C1030.4,524.6 1030.7,524.4 1031.0,524.1 C1031.3,523.8 1031.6,523.4 1031.8,523.1 C1032.1,522.8 1032.4,522.3 1032.5,522.2 " fill="none" stroke="url(#sb2h2)" stroke-width="4" filter="url(#b1)" stroke-linecap="round"/>
<path d="M1007.9,531.2 C1008.1,531.2 1008.6,531.2 1008.9,531.3 C1009.2,531.3 1009.5,531.3 1009.9,531.3 C1010.2,531.3 1010.5,531.3 1010.8,531.3 C1011.1,531.3 1011.4,531.3 1011.8,531.3 C1012.1,531.3 1012.4,531.3 1012.7,531.3 C1013.0,531.3 1013.4,531.3 1013.7,531.2 C1014.0,531.2 1014.3,531.2 1014.6,531.2 C1014.9,531.1 1015.3,531.1 1015.6,531.1 C1015.9,531.0 1016.2,531.0 1016.5,530.9 C1016.8,530.9 1017.1,530.8 1017.4,530.8 C1017.8,530.7 1018.1,530.6 1018.4,530.6 C1018.7,530.5 1019.0,530.4 1019.3,530.4 C1019.6,530.3 1019.9,530.2 1020.2,530.1 C1020.5,530.1 1020.7,530.0 1021.0,529.9 C1021.3,529.8 1021.6,529.7 1021.9,529.6 C1022.2,529.5 1022.5,529.4 1022.7,529.3 C1023.0,529.2 1023.3,529.1 1023.6,529.0 C1023.8,528.9 1024.1,528.7 1024.4,528.6 C1024.6,528.5 1024.9,528.4 1025.2,528.2 C1025.4,528.1 1025.7,528.0 1025.9,527.9 C1026.2,527.7 1026.4,527.6 1026.7,527.4 C1026.9,527.3 1027.1,527.2 1027.4,527.0 C1027.6,526.9 1027.8,526.7 1028.1,526.6 C1028.3,526.4 1028.6,526.2 1028.7,526.1 " fill="none" stroke="url(#sb2h2b)" stroke-width="1.8" filter="url(#b1)" stroke-linecap="round"/>
<path d="M990.0,513.5 A21.0,14.2 0 1 0 1032.0,513.5 A21.0,14.2 0 1 0 990.0,513.5Z" fill="#ae2c00" stroke="#1c0600" stroke-width="0.75"/>
<path d="M601.0,500.5 L636.0,566.9 L639.5,626.4 L604.5,558.3Z" fill="#720000" stroke="#1c0600" stroke-width="0.75" stroke-linejoin="round"/>
<path d="M707.8,546.6 L716,542 L717.9,594 Q718,599 711.3,602.2Z" fill="#f40000" stroke="#1c0600" stroke-width="0.75" stroke-linejoin="round"/>
<path d="M636.0,566.9 L707.8,546.6 L711.3,602.2 L639.5,626.4Z" fill="#dc0000" stroke="#1c0600" stroke-width="0.75" stroke-linejoin="round"/>
<path d="M601,500.5 L671.6,481.3 Q684,478.2 690.6,487.6 L714.4,533.6 Q718.4,541.4 710.6,545.6 L707.8,546.6 L636,566.9Z" fill="#fd0000" stroke="#1c0600" stroke-width="0.75" stroke-linejoin="round"/>
<path d="M1111.2,610 V644.916 A8.199999999999932,5.083999999999958 0 0 0 1127.6,644.916 V610Z" fill="url(#pinR)" stroke="#5a0000" stroke-width=".5"/>
<path d="M1054.4,544.2 L1099.5,572.0 L1103.0,631.5 L1058.2,602.8Z" fill="#720000" stroke="#1c0600" stroke-width="0.75" stroke-linejoin="round"/>
<path d="M1189.3,500.1 L1193.5,558.0 L1103.0,631.5 L1099.5,572.0Z" fill="#e00000" stroke="#1c0600" stroke-width="0.75" stroke-linejoin="round"/>
<path d="M1144.6,471.8 L1189.3,500.1 L1099.5,572.0 L1054.4,544.2Z" fill="#fd0000" stroke="#1c0600" stroke-width="0.75" stroke-linejoin="round"/>
</g>
<g id="ribbon-icons">
<rect x="13.6" y="8.2" width="22.6" height="24" rx="1.5" fill="#d2dbe9"/>
<path d="M18.6,11.8 v-3.4 h3.6 a3,3 0 0 1 5.6,0 h3.6 v3.4z" fill="#aebbd4"/>
<path d="M27.7,16.2 h8.4 l4.6,4.6 v13.6 h-13z" fill="#f3f6fb" stroke="#aab8d4" stroke-width="1"/>
<path d="M36.1,16.2 v4.6 h4.6" fill="none" stroke="#aab8d4" stroke-width="1"/>
<g stroke="#55679a" stroke-width="1.1" fill="none"><path d="M56.7,13.2 L61.6,22.6 M62.4,13.2 L57.5,22.6"/><circle cx="57" cy="24.5" r="1.9"/><circle cx="62.2" cy="24.5" r="1.9"/></g>
<g stroke="#55679a" stroke-width="1" fill="#f5f6f7"><path d="M52.5,42.8 h6 l2.2,2.2 v7.2 h-8.2z"/><path d="M58.2,45.3 h6 l2.5,2.5 v6.6 h-8.5z"/><path d="M54.2,46 h3 M54.2,48 h3 M54.2,50 h3 M60,49.3 h5 M60,51.2 h5 M60,53 h5" stroke-width=".8"/></g>
<rect x="92.5" y="9.5" width="20.5" height="20.2" fill="#e6ebf4" stroke="#a9b4ce" stroke-width="1"/>
<path d="M100.1,12 h4.9 v4.9 h4.8 v5.1 h-4.8 v5 h-4.9 v-5 h-4.9 v-5.1 h4.9z" fill="#9aa7c5"/>
<path d="M98.8,57.4 h5.6 l-2.8,2.9z" fill="#111"/>
<path d="M148.7,9.6 h15.2 v4.6 h-8.6 v9.8 h8.6 v4.6 h-15.2z" fill="#ffe100" stroke="#c9a900" stroke-width="1"/>
<path d="M147.9,24 h3.4 v2.7 h2.9 v3.4 h-2.9 v2.7 h-3.4 v-2.7 h-2.9 v-3.4 h2.9z" fill="#12c012"/>
<circle cx="196.8" cy="19.8" r="10.3" fill="none" stroke="#c8c8c8" stroke-width=".8" stroke-dasharray="2 1.5"/>
<g transform="translate(196.8,10.4) rotate(0)"><path d="M-4,-3.1 h8 v6.2 h-2.3 v-3.6 h-3.4 v3.6 h-2.3z" fill="#ffe100" stroke="#d4a800" stroke-width=".9"/></g>
<g transform="translate(206.2,19.8) rotate(90)"><path d="M-4,-3.1 h8 v6.2 h-2.3 v-3.6 h-3.4 v3.6 h-2.3z" fill="#ffe100" stroke="#d4a800" stroke-width=".9"/></g>
<g transform="translate(196.8,29.3) rotate(180)"><path d="M-4,-3.1 h8 v6.2 h-2.3 v-3.6 h-3.4 v3.6 h-2.3z" fill="#ffe100" stroke="#d4a800" stroke-width=".9"/></g>
<g transform="translate(187.4,19.8) rotate(270)"><path d="M-4,-3.1 h8 v6.2 h-2.3 v-3.6 h-3.4 v3.6 h-2.3z" fill="#ffe100" stroke="#d4a800" stroke-width=".9"/></g>
<path d="M239.9,9.5 H262 M239.9,30.7 H262" stroke="#000" stroke-width="1"/>
<path d="M250.8,12 V28" stroke="#0a0aff" stroke-width="1.3"/><path d="M250.8,10.3 l2.7,4.6 h-5.4z M250.8,29.9 l2.7,-4.6 h-5.4z" fill="#0a0aff"/>
<path d="M292.2,19.5 H314" stroke="#000" stroke-width="1"/>
<path d="M302.7,8 V16 M302.7,23 V30.7" stroke="#0a0aff" stroke-width="1.3"/><path d="M302.7,19 l2.7,-4.4 h-5.4z M302.7,20 l2.7,4.4 h-5.4z" fill="#0a0aff"/>
<path d="M338,24.5 H349.2 M338.3,24.5 L344.3,15.4" stroke="#000" stroke-width="1" fill="none"/><path d="M342.2,18.8 Q345.8,20.4 346.2,24.3" stroke="#0a0aff" stroke-width="1" fill="none"/>
<circle cx="365.5" cy="19.7" r="6.1" fill="none" stroke="#000" stroke-width="1"/><circle cx="365.5" cy="19.7" r="3.7" fill="none" stroke="#000" stroke-width="1"/><circle cx="365.5" cy="19.7" r="1.1" fill="#0a0aff"/>
<circle cx="390.4" cy="20.8" r="4.3" fill="none" stroke="#000" stroke-width="1"/><path d="M382,24.6 L394,14.3" stroke="#000" stroke-width="1"/><path d="M388,21.5 L391.5,18.5" stroke="#0a0aff" stroke-width="1"/>
<path d="M409.6,14 V25.8" stroke="#0a0aff" stroke-width="1.2"/><path d="M404,14.6 L407.6,20 L404,25.2 M415.3,14.6 L411.7,20 L415.3,25.2" stroke="#000" stroke-width="1.1" fill="none"/>
<path d="M338.6,42.8 V53.4 H349.2" stroke="#000" stroke-width="1.2" fill="none"/><path d="M338.6,49.6 H342.6 V53.4" stroke="#0a0aff" stroke-width="1" fill="none"/>
<path d="M360,44.4 H371.3 M360,52.8 H371.3" stroke="#000" stroke-width="1.1"/><path d="M361.5,48.6 H370" stroke="#0a0aff" stroke-width="1.1"/><path d="M359.8,48.6 l3,-1.8 v3.6z M371.5,48.6 l-3,-1.8 v3.6z" fill="#0a0aff"/>
<path d="M383.5,45.5 H392.5 M383.5,52 H392.5" stroke="#0a0aff" stroke-width="1.1"/><path d="M381.8,45.5 l3,-1.8 v3.6z M394.2,45.5 l-3,-1.8 v3.6z M381.8,52 l3,-1.8 v3.6z M394.2,52 l-3,-1.8 v3.6z" fill="#0a0aff"/>
<path d="M404.4,54.6 L416.2,43" stroke="#000" stroke-width="1"/><circle cx="410.6" cy="48.6" r="2.7" fill="none" stroke="#000" stroke-width="1"/><circle cx="410.6" cy="48.6" r="1" fill="#000"/>
<circle cx="452.4" cy="19.9" r="11.6" fill="#000"/>
<text x="444.6" y="24.2" font-family="Liberation Sans,sans-serif" font-size="11.4" fill="#fff" textLength="16" lengthAdjust="spacingAndGlyphs">10,0</text>
<path d="M482.4,11.8 h10.3 v4.4 h-5.2 v7.2 h5.2 v4.4 h-10.3z" fill="#ffe100" stroke="#d4a800" stroke-width="1"/>
<path d="M507.6,11.8 h-5.4 v7.6 h-4.8 v3.6 h4.8 v4.8 h5.4z" fill="#ffe100" stroke="#d4a800" stroke-width="1"/>
<path d="M493.5,11.8 H502 M493.5,27.8 H502" stroke="#c0c0c0" stroke-width=".8" stroke-dasharray="1 1.2"/>
<rect x="534.4" y="7" width="16.6" height="15.6" fill="#a9b5cf"/>
<path d="M525.2,24.6 L541.6,11.3 L546.3,13.6 L546.3,18.4 L532,32.7 L525.2,32.7z" fill="#c9d2e3" stroke="#66779f" stroke-width=".9" stroke-linejoin="round"/>
<path d="M525.4,24.8 h6.6 v1.8 h-2.1 v3.8 h2.1 v2.1 h-6.6 v-2.1 h2.1 v-3.8 h-2.1z" fill="#66779f"/>
<path d="M532,24.8 L546.3,13.6 M532,26.6 L546.3,15.2 M530,30 L546.3,17" stroke="#8e9cbd" stroke-width=".7"/>
<path d="M534.7,57.4 h5.6 l-2.8,2.9z" fill="#111"/>
<g stroke="#55668f" fill="none" stroke-width="1.2"><path d="M566,12 H569 M575,12 H580.6 V29.6 H584.6 M575.5,16.8 H596 M588.6,13.2 V16.8 M590.2,30 H596" /><path d="M569,9.6 L572,12 L569,14.4z M575,9.6 L572,12 L575,14.4z" fill="#55668f" stroke-width=".6"/><circle cx="588.6" cy="10.6" r="2.3" fill="#f5f6f7"/><ellipse cx="580.6" cy="23" rx="2.8" ry="3" fill="#f5f6f7"/><path d="M577.8,23 H583.4" stroke-width=".9"/><path d="M585.2,27.2 V32.8 M589.6,27.2 V32.8" stroke-width="1.4"/></g>
<path d="M577.7,57.4 h5.6 l-2.8,2.9z" fill="#111"/>
<rect x="627.4" y="5.4" width="20.4" height="28.4" fill="#e6edf8" stroke="#b9c8e6" stroke-width="1"/>
<text x="637.6" y="21.6" font-family="Liberation Mono,monospace" font-weight="bold" font-size="16" fill="#3c4c7c" text-anchor="middle">i</text>
<path d="M630,25.4 H645 M630,27.6 H645 M630,29.8 H645" stroke="#8e9cc0" stroke-width=".8" stroke-dasharray="2.6 1 30"/>
<path d="M633.7,57.4 h5.6 l-2.8,2.9z" fill="#111"/>
<rect x="691.3" y="9.5" width="27.4" height="21.2" fill="#fff" stroke="#a0a0a0" stroke-width="1"/>
<path d="M692,12.2 H718 M692,14.8 H718 M692,17.4 H718 M692,20 H718 M692,22.6 H718 M692,25.2 H718 M692,27.8 H718" stroke="#a6d6f7" stroke-width="1"/>
<path d="M695.4,10 V30.4 M712.3,10 V30.4" stroke="#a6d6f7" stroke-width="1"/>
<path d="M701.5,57.4 h5.6 l-2.8,2.9z" fill="#111"/>
<g stroke="#b5c0da" stroke-width=".9" fill="none"><path d="M745.3,12 H767.4 V20.8 M745.3,12 V20.8 M745.3,12 L749.6,8.4 H771.4 L767.4,12 M771.4,8.4 V17.4"/><path d="M749.6,8.4 V17.4" stroke="#d0d8e8"/></g>
<path d="M745.3,20.8 L749.6,17.4 H771.4 L767.4,20.8z" fill="#d3dbea" stroke="#9caad0" stroke-width=".8"/>
<path d="M767.4,20.8 L771.4,17.4 V27.4 L767.4,30.8z" fill="#aebbd6" stroke="#9caad0" stroke-width=".8"/>
<rect x="745.3" y="20.8" width="22.1" height="10" fill="#bcc8df" stroke="#9caad0" stroke-width=".8"/>
<rect x="793" y="9.1" width="22.2" height="21.1" rx="3.2" fill="#6468dc"/>
<rect x="798.6" y="15.8" width="10.8" height="2.5" fill="#fff"/><rect x="798.6" y="21" width="10.8" height="2.5" fill="#fff"/>
<rect x="842.2" y="9.1" width="21.9" height="21.9" rx="3.2" fill="#8595b5"/>
<path d="M851.4,13.4 h3.6 l-.7,9.8 h-2.2z" fill="#fff"/><circle cx="853.2" cy="26.2" r="1.8" fill="#fff"/>
<path d="M899.6,13.4 V31 M922.5,13.4 V31" stroke="#000" stroke-width="1.1"/>
<path d="M902,18.6 H920" stroke="#9a00c8" stroke-width="1.1"/><path d="M900.4,18.6 l3.6,-2.2 v4.4z M921.7,18.6 l-3.6,-2.2 v4.4z" fill="#9a00c8"/>
<text x="911" y="14.4" font-family="Liberation Sans,sans-serif" font-size="7.5" fill="#9a00c8" text-anchor="middle">45</text>
<text x="953.5" y="30.2" font-family="Liberation Serif,serif" font-size="30.6" fill="#000" text-anchor="middle">T</text>
<rect x="980.2" y="14.4" width="31.4" height="11.4" fill="#ffff8c" stroke="#b8860b" stroke-width="1"/>
<path d="M982.82,14.4 v2.4 M985.43,14.4 v2.4 M988.05,14.4 v2.4 M990.67,14.4 v4.4 M993.28,14.4 v2.4 M995.90,14.4 v2.4 M998.52,14.4 v2.4 M1001.13,14.4 v4.4 M1003.75,14.4 v2.4 M1006.37,14.4 v2.4 M1008.98,14.4 v2.4 " stroke="#8a6a10" stroke-width=".7"/>
<rect x="1039.1" y="8" width="21.8" height="23" fill="#9dabca"/>
<path d="M1043.7,19.4 L1047.5,23 L1055.6,14.8" stroke="#fff" stroke-width="3" fill="none"/>
<circle cx="1092.4" cy="19.9" r="11.6" fill="#8595b5"/>
<path d="M1087.6,15.1 L1097.2,24.7 M1097.2,15.1 L1087.6,24.7" stroke="#fff" stroke-width="3.6"/>
</g>
<g id="panel-icons">
<g transform="translate(7.6,118.3) scale(1.0)"><path d="M0.8,2.4 Q0.8,1 2.2,1 L9.6,1 L11.4,0.3 Q13.2,0 13.2,1.8 L13.2,10.2 Q13.2,11.2 12.4,11.6 L10.4,12.6 L2.2,12.6 Q0.8,12.6 0.8,11.2z" fill="#8fae8f" stroke="#000" stroke-width="1.5" stroke-linejoin="round"/><path d="M10.6,1.2 V12.4" stroke="#000" stroke-width="1.35"/><path d="M8.6,3.8 H4.4 V6.6 H6.4 V7.4 H4.4 V9.8 H8.6" stroke="#000" stroke-width="1.6500000000000001" fill="none" stroke-linejoin="round"/></g>
<path d="M14.4,140.6 L18.6,144.4 L14.4,148.20000000000002z" fill="#fff" stroke="#a6a6a6" stroke-width="1"/>
<path d="M14.4,176.6 L18.6,180.4 L14.4,184.20000000000002z" fill="#fff" stroke="#a6a6a6" stroke-width="1"/>
<path d="M41.1,142.8 L37.6,144.3 L37.6,141.3z M39.1,147.6 L35.6,146.2 L37.7,144.1z M34.3,149.6 L32.8,146.1 L35.8,146.1z M29.5,147.6 L30.9,144.1 L33.0,146.2z M27.5,142.8 L31.0,141.3 L31.0,144.3z M29.5,138.0 L33.0,139.4 L30.9,141.5z M34.3,136.0 L35.8,139.5 L32.8,139.5z M39.1,138.0 L37.7,141.5 L35.6,139.4z " fill="#ff8c00"/><circle cx="34.3" cy="142.8" r="4" fill="#ffee10" stroke="#ffb000" stroke-width=".6"/>
<path d="M28.3,158.2 h7.2 v7.2 h-7.2z" fill="#fff" stroke="#000" stroke-width="1.2"/><path d="M31,155.8 h6 l2.6,2.6 v5 h-8.6z" fill="#fff" stroke="#000" stroke-width="1.2" stroke-linejoin="round"/>
<path d="M29.6,172.6 V184.6 M29.6,174.6 H33.4 M29.6,179.8 H33.4 M29.6,184.6 H33.4" stroke="#6a6a6a" stroke-width="1" fill="none"/>
<rect x="33.6" y="172.9" width="4.2" height="3.6" fill="#ffe000" stroke="#9a8a00" stroke-width=".8"/><rect x="33.6" y="178" width="4.2" height="3.6" fill="#fff" stroke="#444" stroke-width=".9"/><rect x="33.6" y="182.9" width="4.2" height="3.2" fill="#fff" stroke="#444" stroke-width=".9"/>
<path d="M27.6,196.4 h5.6 v3.2 h5 q1.6,0 1.6,1.2 v1 q0,1.4 -1.6,1.4 h-10.6z" fill="#8fae8f" stroke="#000" stroke-width="1.4" stroke-linejoin="round"/>
<rect x="35" y="190" width="6.8" height="6.8" fill="#fff" stroke="#000" stroke-width="1.2"/><text x="38.5" y="195.7" font-family="Liberation Sans,sans-serif" font-weight="bold" font-size="6.2" fill="#000" text-anchor="middle">L</text>
<path d="M27.1,191.79999999999998 v-1 a1.6,1.6 0 0 1 3.2,0 v1" fill="none" stroke="#000" stroke-width="1"/><rect x="25.8" y="191.6" width="5.8" height="4" fill="#2fd8e8" stroke="#000" stroke-width=".9"/>
<path d="M27.6,214.2 h5.6 v3.6 h5 q1.6,0 1.6,1.2 v.8 q0,1.4 -1.6,1.4 h-10.6z" fill="#e80000" stroke="#000" stroke-width="1.4" stroke-linejoin="round"/>
<path d="M39.8,208.8 h-6 q-1.2,0 -1.2,1.2 v5 q0,1.2 1.2,1.2 h6 v-2.2 h-4.4 v-3 h4.4z" fill="#ffe000" stroke="#000" stroke-width="1.1" stroke-linejoin="round"/>
<path d="M27.1,209.79999999999998 v-1 a1.6,1.6 0 0 1 3.2,0 v1" fill="none" stroke="#000" stroke-width="1"/><rect x="25.8" y="209.6" width="5.8" height="4" fill="#2fd8e8" stroke="#000" stroke-width=".9"/>
<path d="M178.8,673.6 h7.2 l-3.6,3.9z" fill="#7eb4ea"/>
<g transform="translate(12.2,813.2) scale(1.0)"><path d="M0.8,2.4 Q0.8,1 2.2,1 L9.6,1 L11.4,0.3 Q13.2,0 13.2,1.8 L13.2,10.2 Q13.2,11.2 12.4,11.6 L10.4,12.6 L2.2,12.6 Q0.8,12.6 0.8,11.2z" fill="#f2e266" stroke="#8a7c28" stroke-width="1.1" stroke-linejoin="round"/><path d="M10.6,1.2 V12.4" stroke="#8a7c28" stroke-width="0.9900000000000001"/><path d="M8.6,3.8 H4.4 V6.6 H6.4 V7.4 H4.4 V9.8 H8.6" stroke="#8a7c28" stroke-width="1.2100000000000002" fill="none" stroke-linejoin="round"/></g>
<rect x="107.4" y="811.7" width="12.8" height="12.8" fill="#fff" stroke="#000" stroke-width="1.1"/><text x="113.8" y="822.6" font-family="Liberation Serif,serif" font-weight="bold" font-size="13" fill="#000" text-anchor="middle">i</text>
</g>
<g id="wbtn-icons"><rect x="1234.9" y="103.9" width="11.1" height="2.1" fill="#5e5e5e"/>
<path d="M1268.2,95.6 H1278.6 V104" fill="none" stroke="#5e5e5e" stroke-width="1.1"/><rect x="1266.4" y="97.4" width="10" height="8.4" fill="#fff" stroke="#5e5e5e" stroke-width="1.1"/><path d="M1266.4,98.2 H1276.4" stroke="#5e5e5e" stroke-width="1.6"/>
<rect x="1294" y="93.1" width="19.9" height="14.8" fill="#c75b5e"/><path d="M1300.2,96.8 L1307.6,104.2 M1307.6,96.8 L1300.2,104.2" stroke="#fff" stroke-width="1.8"/></g>
<g id="grip"><rect x="1317" y="841" width="2" height="2" fill="#bcbcbc"/><rect x="1314" y="844" width="2" height="2" fill="#bcbcbc"/><rect x="1317" y="844" width="2" height="2" fill="#bcbcbc"/><rect x="1311" y="847" width="2" height="2" fill="#bcbcbc"/><rect x="1314" y="847" width="2" height="2" fill="#bcbcbc"/><rect x="1317" y="847" width="2" height="2" fill="#bcbcbc"/></g>
<g id="triad" font-family="Liberation Sans,sans-serif" font-size="11.5">
<path d="M412.7,781.5 L398.6,755.6" stroke="#e77c7c" stroke-width="1.3"/><path d="M399.4,757.4 L404.8,761.6 L400.6,764.8z" fill="#e77c7c" stroke="#e77c7c" stroke-width=".8"/>
<path d="M412.7,781.5 L411.2,758" stroke="#2fdc2f" stroke-width="1.4"/><path d="M410.9,753.6 L413.9,760.6 L408.6,760.8z" fill="#2fdc2f"/>
<path d="M412.7,781.5 L444,772.2" stroke="#3535e6" stroke-width="1.4"/><path d="M450.8,770.2 L442.8,774.8 L441.4,770.6z" fill="#3535e6"/>
<text x="392.2" y="753.4" fill="#ef9d9d" stroke="#ef9d9d" stroke-width=".45">X</text><text x="406.8" y="751" fill="#8fee8f" stroke="#8fee8f" stroke-width=".45">Y</text><text x="454.4" y="772.4" fill="#8585f2" stroke="#8585f2" stroke-width=".45">Z</text>
</g>
<g id="ftb-icons">
<path d="M494.4,118.8 L501.6,110.6" stroke="#3c3c3c" stroke-width="1.2"/><path d="M499.2,107.6 L504.6,113.8 L507,112.4 L507.6,109.6 L512.8,104.8 L508.4,100 L503.4,104.6 L500.8,105.2z" fill="#454545"/>
<rect x="524.2" y="100.4" width="15.4" height="1.7" fill="#84f052" stroke="#b8b8b8" stroke-width=".6"/><rect x="541.2" y="104.6" width="2" height="15.2" fill="#84f052" stroke="#b8b8b8" stroke-width=".6"/>
<path d="M528.6,106.4 V110.8 L532.6,115.4 H537.6" fill="none" stroke="#555" stroke-width="1.1"/><path d="M528.6,104.2 l2.1,3.2 h-4.2z M539.6,115.4 l-3.2,-2.1 v4.2z" fill="#555"/>
<rect x="556.3" y="104.4" width="25.6" height="11.4" fill="#ffff96" stroke="#b8860b" stroke-width="1"/>
<path d="M558.86,104.4 v2.4 M561.42,104.4 v4.2 M563.98,104.4 v2.4 M566.54,104.4 v4.2 M569.10,104.4 v2.4 M571.66,104.4 v4.2 M574.22,104.4 v2.4 M576.78,104.4 v4.2 M579.34,104.4 v2.4 " stroke="#8a6a10" stroke-width=".7"/>
<circle cx="598.7" cy="103.6" r="3.1" fill="none" stroke="#222" stroke-width="1"/><circle cx="598.7" cy="103.6" r="1.2" fill="#222"/>
<path d="M603.4,105.8 v10.6 l2.5,-2.3 l1.9,4 l1.7,-.8 l-1.9,-3.9 h3.4z" fill="#fff" stroke="#5a5a5a" stroke-width=".9" stroke-linejoin="round"/>
<path d="M627.4,108.6 L634.6,101.4 L635.6,102.4 L628.4,109.6z" fill="#fff" stroke="#333" stroke-width=".8"/>
<path d="M635.6,106.6 v10.6 l2.5,-2.3 l1.9,4 l1.7,-.8 l-1.9,-3.9 h3.4z" fill="#fff" stroke="#5a5a5a" stroke-width=".9" stroke-linejoin="round"/>
<path d="M660.4,101 H668.6 L665.4,105.6 H657.4z" fill="#fff" stroke="#222" stroke-width="1"/>
<path d="M667.6,106.6 v10.6 l2.5,-2.3 l1.9,4 l1.7,-.8 l-1.9,-3.9 h3.4z" fill="#fff" stroke="#5a5a5a" stroke-width=".9" stroke-linejoin="round"/>
<path d="M695.6,101 H689.8 V108 H695.6" fill="none" stroke="#111" stroke-width="1.5"/>
<path d="M699.4,106.4 v10.6 l2.5,-2.3 l1.9,4 l1.7,-.8 l-1.9,-3.9 h3.4z" fill="#fafafa" stroke="#9a9a9a" stroke-width=".9" stroke-linejoin="round"/>
<rect x="719" y="104.1" width="15.8" height="15.8" fill="#84f052"/>
<g fill="none" stroke="#a9a9a9" stroke-width=".9"><rect x="723.1" y="100.3" width="15.8" height="15.8"/><rect x="719" y="104.1" width="15.8" height="15.8"/><path d="M719,104.1 l4.1,-3.8 M734.8,104.1 l4.1,-3.8 M719,119.9 l4.1,-3.8 M734.8,119.9 l4.1,-3.8"/></g>
<path d="M751.1,104.1 L755.2,100.3 H771.0 L766.9,104.1z" fill="#84f052"/>
<g fill="none" stroke="#a9a9a9" stroke-width=".9"><rect x="755.2" y="100.3" width="15.8" height="15.8"/><rect x="751.1" y="104.1" width="15.8" height="15.8"/><path d="M751.1,104.1 l4.1,-3.8 M766.9,104.1 l4.1,-3.8 M751.1,119.9 l4.1,-3.8 M766.9,119.9 l4.1,-3.8"/></g>
<path d="M783.2,104.1 L787.3000000000001,100.3 V116.1 L783.2,119.9z" fill="#84f052"/>
<g fill="none" stroke="#a9a9a9" stroke-width=".9"><rect x="787.3000000000001" y="100.3" width="15.8" height="15.8"/><rect x="783.2" y="104.1" width="15.8" height="15.8"/><path d="M783.2,104.1 l4.1,-3.8 M799.0,104.1 l4.1,-3.8 M783.2,119.9 l4.1,-3.8 M799.0,119.9 l4.1,-3.8"/></g>
<path d="M831.0999999999999,104.1 L835.1999999999999,100.3 V116.1 L831.0999999999999,119.9z" fill="#84f052"/>
<g fill="none" stroke="#a9a9a9" stroke-width=".9"><rect x="819.4" y="100.3" width="15.8" height="15.8"/><rect x="815.3" y="104.1" width="15.8" height="15.8"/><path d="M815.3,104.1 l4.1,-3.8 M831.0999999999999,104.1 l4.1,-3.8 M815.3,119.9 l4.1,-3.8 M831.0999999999999,119.9 l4.1,-3.8"/></g>
<g stroke="#b4c8b0" stroke-width=".8"><path d="M847,103.6 L853.2,99.4 L866.6,104 L860.4,108.4z" fill="#eefaea"/><path d="M847,103.6 L860.4,108.4 V121 L847,116.2z" fill="#e6f7e0"/><path d="M860.4,108.4 L866.6,104 V116.4 L860.4,121z" fill="#c8eebc"/></g>
<rect x="879.2" y="104.1" width="15.8" height="15.8" fill="#84f052"/>
<g fill="none" stroke="#a9a9a9" stroke-width=".9"><rect x="883.3000000000001" y="100.3" width="15.8" height="15.8"/><rect x="879.2" y="104.1" width="15.8" height="15.8"/><path d="M879.2,104.1 l4.1,-3.8 M895.0,104.1 l4.1,-3.8 M879.2,119.9 l4.1,-3.8 M895.0,119.9 l4.1,-3.8"/></g>
<path d="M885.4,104.6 v10.6 l2.5,-2.3 l1.9,4 l1.7,-.8 l-1.9,-3.9 h3.4z" fill="#6a6a6a" stroke="#444" stroke-width=".9" stroke-linejoin="round"/>
<rect x="911.4" y="103.2" width="19.4" height="16.6" fill="#f8f8f8" stroke="#b0b0b0" stroke-width="1"/>
<path d="M913.6,105.6 H928.8 M913.6,107.7 H928.8 M913.6,109.8 H928.8 M913.6,111.9 H928.8 M913.6,114 H928.8 M913.6,116.1 H928.8 M913.6,118.2 H928.8" stroke="#8c8c8c" stroke-width=".8"/>
<path d="M913.2,98.6 h5.2 l-2.6,2.8z" fill="#8c8c8c"/>
<g stroke="#1f7da0" stroke-width="1.1" stroke-linejoin="round"><path d="M944.4,103.6 L949,100.9 H954.6 L950.2,103.6z" fill="#d8f0fa"/><path d="M950.2,103.6 L954.6,100.9 V110.6 L950.2,113.4z" fill="#7cc4e2"/><path d="M950.2,113.4 L954.6,110.6 H962.8 L958.6,113.4z" fill="#e8f6fc"/><path d="M958.6,113.4 L962.8,110.6 V115.8 L958.6,118.8z" fill="#7cc4e2"/><path d="M944.4,103.6 H950.2 V113.4 H958.6 V118.8 H944.4z" fill="#a8dcf2"/><path d="M946.6,116.6 H956.6" stroke="#fff" stroke-width="1.6"/></g>
<path d="M975.4,113.2 L981.2,110.8 V99.6 L990.2,104.2 V116.6" fill="none" stroke="#8a8a8a" stroke-width="1"/><path d="M977.6,120.8 L982.2,117.8 H997 L992.2,120.8z" fill="#c0c0f4" stroke="#8a8a8a" stroke-width=".8"/>
<g stroke="#b9b9b9" stroke-width=".9" fill="none"><path d="M1007.2,110.6 V104.6 H1023.6 V110.6 M1007.2,104.6 L1011.4000000000001,101.8 H1027.8 L1023.6,104.6 M1027.8,101.8 V107.6 M1011.4000000000001,101.8 V107.6"/></g>
<path d="M1007.2,110.6 L1011.4000000000001,107.6 H1027.8 L1023.6,110.6z" fill="#fff07a" stroke="#c9a400" stroke-width=".8"/>
<path d="M1023.6,110.6 L1027.8,107.6 V116.6 L1023.6,119.8z" fill="#e6c21c" stroke="#c9a400" stroke-width=".8"/>
<rect x="1007.2" y="110.6" width="16.4" height="9.2" fill="#ffe22e" stroke="#c9a400" stroke-width=".8"/>
<g stroke="#b9b9b9" stroke-width=".9" fill="none"><path d="M1039.2,110.6 V104.6 H1055.6000000000001 V110.6 M1039.2,104.6 L1043.4,101.8 H1059.8 L1055.6000000000001,104.6 M1059.8,101.8 V107.6 M1043.4,101.8 V107.6"/></g>
<path d="M1039.2,110.6 L1043.4,107.6 H1059.8 L1055.6000000000001,110.6z" fill="#fff07a" stroke="#c9a400" stroke-width=".8"/>
<path d="M1055.6000000000001,110.6 L1059.8,107.6 V116.6 L1055.6000000000001,119.8z" fill="#e6c21c" stroke="#c9a400" stroke-width=".8"/>
<rect x="1039.2" y="110.6" width="16.4" height="9.2" fill="#ffe22e" stroke="#c9a400" stroke-width=".8"/>
<path d="M1043.2,99.6 L1055.4,108 M1055.4,99.6 L1043.2,108" stroke="#d01414" stroke-width="2.8"/>
<rect x="1070.6" y="107.2" width="15" height="11.6" fill="#e6f1fb" stroke="#62a8e0" stroke-width="1"/><path d="M1070.6,108 H1085.6" stroke="#62a8e0" stroke-width="1.8"/>
<path d="M1078.6,111.4 L1085.4,104.6 L1083,102.2 L1092,100.6 L1090.4,109.6 L1088,107.2 L1081.2,114z" fill="#fff" stroke="#2f8fd6" stroke-width="1.1" stroke-linejoin="round"/>
</g>
</svg>
<span class="t" style="left:16.6px;top:39.0px;font-size:11px;line-height:14px;letter-spacing:-0.15px;color:#8e8e8e;">Liitä</span>
<span class="t" style="left:89.6px;top:39.0px;font-size:11px;line-height:14px;letter-spacing:-0.55px;color:#1e1e1e;">Lisää</span>
<span class="t" style="left:143.5px;top:39.0px;font-size:11px;line-height:14px;letter-spacing:0.03px;color:#1e1e1e;">Uusi</span>
<span class="t" style="left:184.5px;top:39.0px;font-size:11px;line-height:14px;letter-spacing:-0.50px;color:#1e1e1e;">Sarja</span>
<span class="t" style="left:231.6px;top:39.0px;font-size:11px;line-height:14px;letter-spacing:-0.47px;color:#1e1e1e;">Etäisyys</span>
<span class="t" style="left:275.0px;top:39.0px;font-size:11px;line-height:14px;letter-spacing:-0.26px;color:#1e1e1e;">Yhtenevyys</span>
<span class="t" style="left:436.3px;top:39.0px;font-size:11px;line-height:14px;letter-spacing:-0.23px;color:#1e1e1e;">Massa</span>
<span class="t" style="left:476.4px;top:39.0px;font-size:11px;line-height:14px;letter-spacing:-0.18px;color:#1e1e1e;">Räjäytä</span>
<span class="t" style="left:518.4px;top:39.0px;font-size:11px;line-height:14px;letter-spacing:0.15px;color:#1e1e1e;">Pintaan</span>
<span class="t" style="left:562.4px;top:39.0px;font-size:11px;line-height:14px;letter-spacing:-0.03px;color:#1e1e1e;">Kaaviot</span>
<span class="t" style="left:604.5px;top:39.0px;font-size:11px;line-height:14px;letter-spacing:0.42px;color:#1e1e1e;">Nimiketiedot</span>
<span class="t" style="left:675.5px;top:39.0px;font-size:11px;line-height:14px;letter-spacing:0.32px;color:#1e1e1e;">Osaluettelo</span>
<span class="t" style="left:745.7px;top:39.0px;font-size:11px;line-height:14px;letter-spacing:-0.46px;color:#8e8e8e;">Lataa</span>
<span class="t" style="left:782.4px;top:39.0px;font-size:11px;line-height:14px;letter-spacing:-0.11px;color:#1e1e1e;">Ratkaise</span>
<span class="t" style="left:830.6px;top:39.0px;font-size:11px;line-height:14px;letter-spacing:0.39px;color:#8e8e8e;">Virheloki</span>
<span class="t" style="left:897.4px;top:39.0px;font-size:11px;line-height:14px;letter-spacing:0.56px;color:#1e1e1e;">Mitta</span>
<span class="t" style="left:938.1px;top:39.0px;font-size:11px;line-height:14px;letter-spacing:0.07px;color:#1e1e1e;">Teksti</span>
<span class="t" style="left:976.6px;top:39.0px;font-size:11px;line-height:14px;letter-spacing:-0.45px;color:#1e1e1e;">Etäisyys</span>
<span class="t" style="left:1042.5px;top:39.0px;font-size:11px;line-height:14px;letter-spacing:-1.41px;color:#8e8e8e;">OK</span>
<span class="t" style="left:1075.3px;top:39.0px;font-size:11px;line-height:14px;letter-spacing:0.18px;color:#8e8e8e;">Poistu</span>
<span class="t" style="left:10.5px;top:71.7px;font-size:11px;line-height:14px;letter-spacing:0.08px;color:#9c9c9c;">Leikepöytä</span>
<span class="t" style="left:163.4px;top:71.7px;font-size:11px;line-height:14px;letter-spacing:0.37px;color:#9c9c9c;">Malli</span>
<span class="t" style="left:309.6px;top:71.7px;font-size:11px;line-height:14px;letter-spacing:0.36px;color:#9c9c9c;">Ehdot</span>
<span class="t" style="left:634.0px;top:71.7px;font-size:11px;line-height:14px;letter-spacing:0.26px;color:#9c9c9c;">Työkalut</span>
<span class="t" style="left:940.6px;top:71.7px;font-size:11px;line-height:14px;letter-spacing:0.64px;color:#9c9c9c;">Mitat</span>
<span class="t" style="left:1056.6px;top:71.7px;font-size:11px;line-height:14px;letter-spacing:-0.09px;color:#9c9c9c;">Paluu</span>
<span class="t" style="left:3.6px;top:92.0px;font-size:11px;line-height:14px;letter-spacing:-0.26px;color:#000;">Kokoonpano</span>
<span class="t" style="left:28.6px;top:117.1px;font-size:12px;line-height:16px;letter-spacing:-0.36px;color:#000;">VX3002240 VX3002240 Vaihteiston kansi, koneistus</span>
<span class="t" style="left:47.4px;top:135.0px;font-size:12px;line-height:16px;letter-spacing:-0.05px;color:#000;">Visualisointi</span>
<span class="t" style="left:47.4px;top:153.0px;font-size:12px;line-height:16px;letter-spacing:-0.13px;color:#000;">Piirustukset</span>
<span class="t" style="left:47.4px;top:171.0px;font-size:12px;line-height:16px;letter-spacing:0.04px;color:#000;">Ilmiasut</span>
<span class="t" style="left:47.4px;top:189.0px;font-size:12px;line-height:16px;letter-spacing:-0.37px;color:#000;">VX3002239 VX3002239 Vaihdekotelo, valu .LM</span>
<span class="t" style="left:47.4px;top:206.9px;font-size:12px;line-height:16px;letter-spacing:0.10px;color:#1a1aff;">Machinings</span>
<span class="t" style="left:10.0px;top:677.9px;font-size:11px;line-height:14px;letter-spacing:0.28px;color:#000;">D.O.F  0/0/0</span>
<span class="t" style="left:33.2px;top:813.2px;font-size:11px;line-height:14px;letter-spacing:-0.23px;color:#000;">Kokoonpano</span>
<span class="t" style="left:128.6px;top:810.7px;font-size:11px;line-height:14px;letter-spacing:-0.18px;color:#000;">Tuoterakenne</span>
<span class="t" style="left:5.5px;top:834.0px;font-size:11px;line-height:14px;letter-spacing:-0.18px;color:#000;">Valmiina (Opaste: paina F1)</span>
<span class="t" style="left:1115.0px;top:834.0px;font-size:11px;line-height:14px;letter-spacing:-0.04px;color:#000;">dx 182.08</span>
<span class="t" style="left:1184.8px;top:834.0px;font-size:11px;line-height:14px;letter-spacing:-0.21px;color:#000;">dy 113.11</span>
<span class="t" style="left:1255.0px;top:834.0px;font-size:11px;line-height:14px;letter-spacing:-0.26px;color:#000;width:47.5px;overflow:hidden;">dz -197.76</span>
</div>
</body></html>
